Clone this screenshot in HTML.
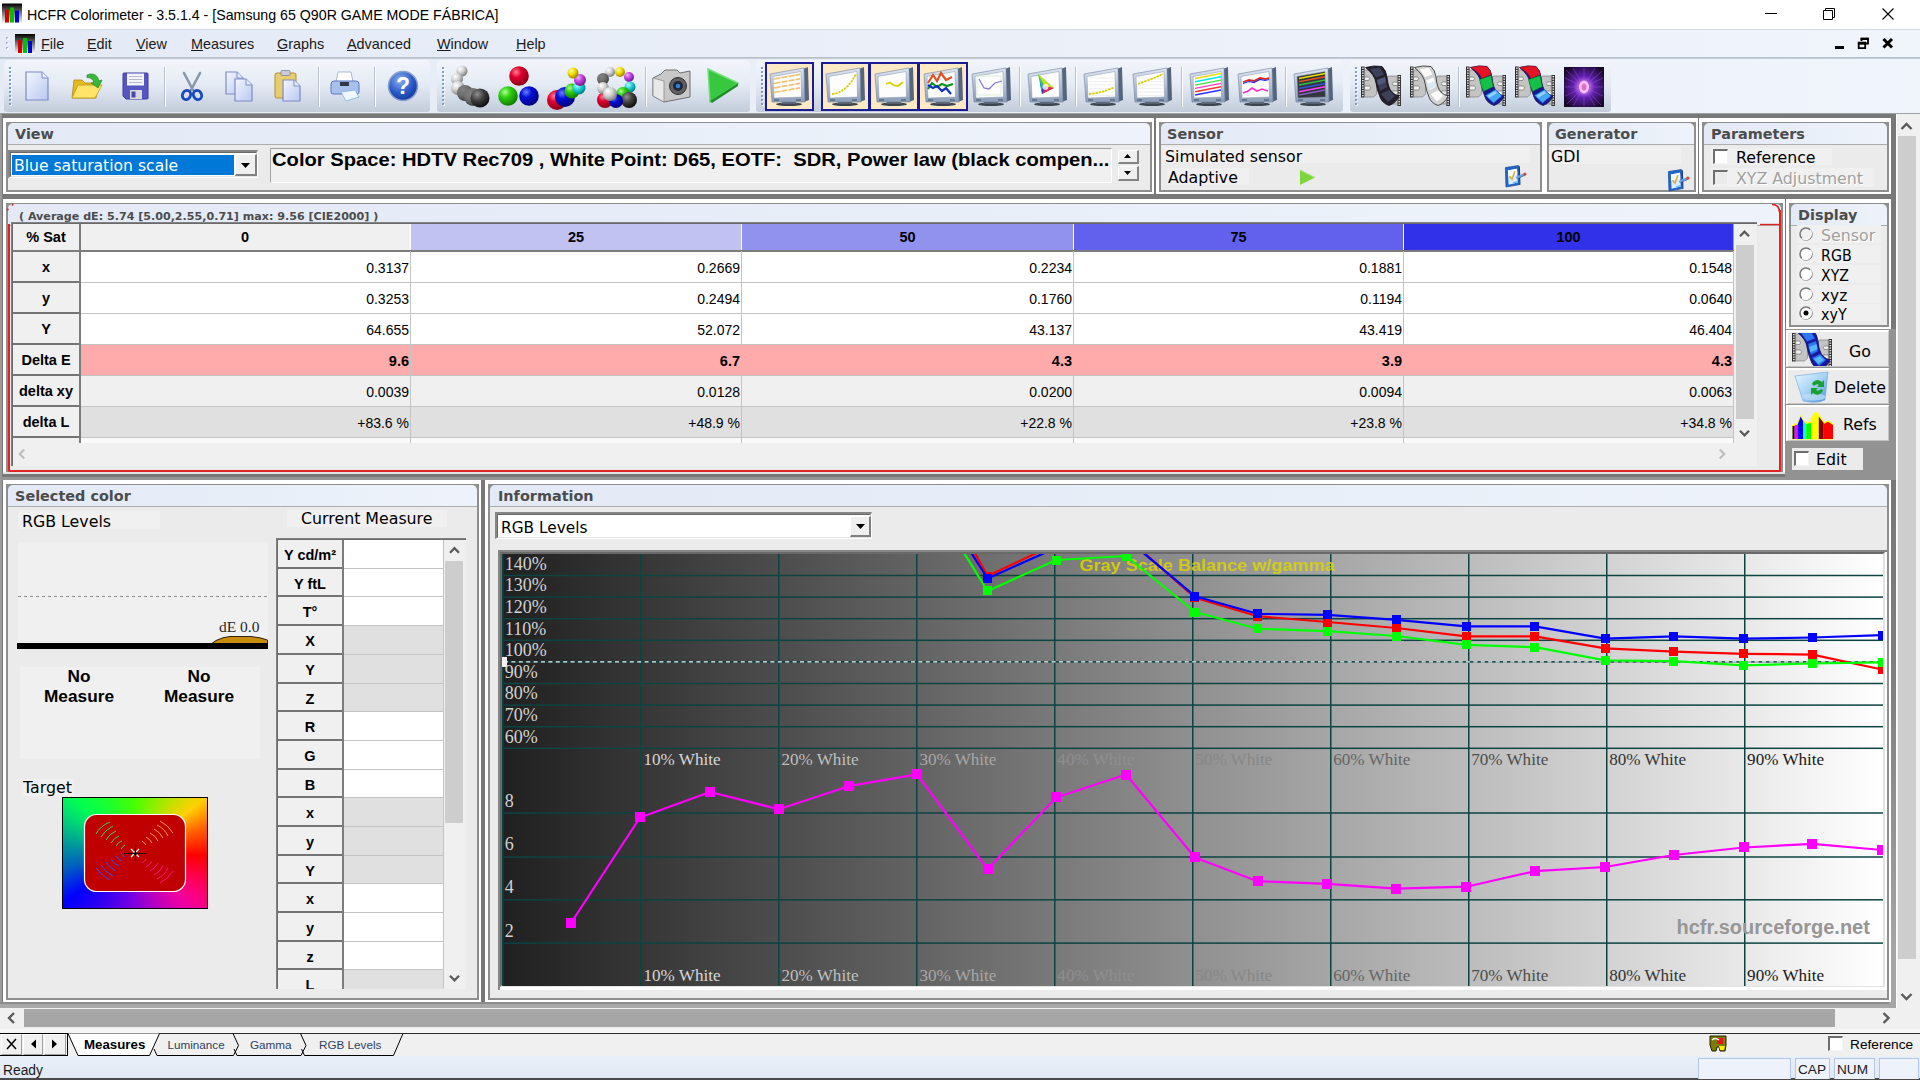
<!DOCTYPE html>
<html lang="en"><head><meta charset="utf-8"><title>HCFR Colorimeter</title>
<style>
html,body{margin:0;padding:0;background:#fff;}
body{width:1920px;height:1080px;position:relative;overflow:hidden;font-family:"Liberation Sans",sans-serif;font-size:14px;color:#000;}
div{position:absolute;box-sizing:border-box;}
svg{position:absolute;overflow:visible;}
.dv{font-family:"DejaVu Sans","Liberation Sans",sans-serif;}
.dvb{font-family:"DejaVu Sans","Liberation Sans",sans-serif;font-weight:bold;}
.ls{font-family:"Liberation Sans",sans-serif;}
.se{font-family:"Liberation Serif",serif;}
.hd{font-family:"DejaVu Sans","Liberation Sans",sans-serif;font-weight:bold;font-size:13.6px;color:#4c4c4c;line-height:16px;transform-origin:0 0;transform:scaleX(1.06);}
.ui{font-family:"Liberation Sans",sans-serif;font-size:14.5px;line-height:18px;}
.c15{font-family:"DejaVu Sans","Liberation Sans",sans-serif;font-size:15.8px;line-height:18px;color:#000;margin-top:1.5px;}
.num{font-family:"Liberation Sans",sans-serif;font-size:14px;line-height:16px;text-align:right;}
.rh{font-family:"Liberation Sans",sans-serif;font-size:14.5px;font-weight:bold;line-height:16px;text-align:center;}
</style></head>
<body>
<div style="left:0px;top:0px;width:1920px;height:29px;background:#fff;"></div>
<svg style="left:2px;top:3px" width="20" height="21" viewBox="0 0 20 20"><defs><linearGradient id="ig2" x1="0" y1="0" x2="0" y2="1"><stop offset="0" stop-color="#000"/><stop offset="1" stop-color="#fff"/></linearGradient></defs><rect width="20" height="20" fill="url(#ig2)"/><rect x="3" y="6" width="4" height="13" fill="#d00000"/><rect x="8" y="4" width="4" height="15" fill="#00c000"/><rect x="13" y="7" width="4" height="12" fill="#0000d0"/></svg>
<div class="ls" style="left:27px;top:6px;white-space:pre;font-size:14.2px;line-height:19px;color:#000;">HCFR Colorimeter - 3.5.1.4 - [Samsung 65 Q90R GAME MODE FÁBRICA]</div>
<svg style="left:0;top:0" width="1920" height="30"><path d="M1765 13.500h12" stroke="#000" stroke-width="1" fill="none"/><path d="M1823.500 10.500h9v9h-9z M1825.500 10.500v-2h9v9h-2" stroke="#000" stroke-width="1" fill="none"/><path d="M1882.500 8.500l11 11M1893.500 8.500l-11 11" stroke="#000" stroke-width="1.100" fill="none"/></svg>
<div style="left:0px;top:29px;width:1920px;height:29px;background:linear-gradient(90deg,#e4ebf6,#e9eef8 40%,#f0f4fb);"></div>
<div style="left:0px;top:57px;width:1920px;height:2px;background:linear-gradient(#b4bcc8,#c9cfd9);"></div>
<div style="left:0px;top:29px;width:1920px;height:1px;background:#d4dbe6;"></div>
<div style="left:6px;top:37px;width:2px;height:2px;background:#9fb4d6;"></div>
<div style="left:7px;top:38px;width:2px;height:2px;background:#fff;opacity:.8;"></div>
<div style="left:6px;top:42px;width:2px;height:2px;background:#9fb4d6;"></div>
<div style="left:7px;top:43px;width:2px;height:2px;background:#fff;opacity:.8;"></div>
<div style="left:6px;top:47px;width:2px;height:2px;background:#9fb4d6;"></div>
<div style="left:7px;top:48px;width:2px;height:2px;background:#fff;opacity:.8;"></div>
<svg style="left:15px;top:34px" width="20" height="20" viewBox="0 0 20 20"><defs><linearGradient id="ig15" x1="0" y1="0" x2="0" y2="1"><stop offset="0" stop-color="#000"/><stop offset="1" stop-color="#fff"/></linearGradient></defs><rect width="20" height="20" fill="url(#ig15)"/><rect x="3" y="6" width="4" height="13" fill="#d00000"/><rect x="8" y="4" width="4" height="15" fill="#00c000"/><rect x="13" y="7" width="4" height="12" fill="#0000d0"/></svg>
<div class="ls" style="left:41px;top:35px;white-space:pre;font-size:14.4px;line-height:19px;color:#1a1a1a;"><u>F</u>ile</div>
<div class="ls" style="left:87px;top:35px;white-space:pre;font-size:14.4px;line-height:19px;color:#1a1a1a;"><u>E</u>dit</div>
<div class="ls" style="left:136px;top:35px;white-space:pre;font-size:14.4px;line-height:19px;color:#1a1a1a;"><u>V</u>iew</div>
<div class="ls" style="left:191px;top:35px;white-space:pre;font-size:14.4px;line-height:19px;color:#1a1a1a;"><u>M</u>easures</div>
<div class="ls" style="left:277px;top:35px;white-space:pre;font-size:14.4px;line-height:19px;color:#1a1a1a;"><u>G</u>raphs</div>
<div class="ls" style="left:347px;top:35px;white-space:pre;font-size:14.4px;line-height:19px;color:#1a1a1a;"><u>A</u>dvanced</div>
<div class="ls" style="left:437px;top:35px;white-space:pre;font-size:14.4px;line-height:19px;color:#1a1a1a;"><u>W</u>indow</div>
<div class="ls" style="left:516px;top:35px;white-space:pre;font-size:14.4px;line-height:19px;color:#1a1a1a;"><u>H</u>elp</div>
<svg style="left:0;top:30px" width="1920" height="28"><path d="M1835 17.500h9" stroke="#000" stroke-width="3"/><path d="M1858.700 13.600h6.500v4.500h-6.500z" stroke="#000" stroke-width="1.800" fill="none"/><path d="M1857.800 13h8.300" stroke="#000" stroke-width="2.600"/><path d="M1861.500 11v-2h6.500v4.500h-2" stroke="#000" stroke-width="1.800" fill="none"/><path d="M1860.600 8.800h8.300" stroke="#000" stroke-width="2.400"/><path d="M1883.500 9l8.500 8.500M1892 9l-8.500 8.500" stroke="#000" stroke-width="3" fill="none"/></svg>
<div style="left:0px;top:59px;width:1920px;height:54px;background:linear-gradient(90deg,#e4ebf6,#e9eef8 40%,#f0f4fb);"></div>
<div style="left:4px;top:60px;width:426px;height:52px;background:linear-gradient(#f2f5fa 0%,#e6ecf5 45%,#d3dbe8 75%,#c3ccda 100%);border-radius:5px 5px 3px 3px;"></div>
<div style="left:9px;top:67px;width:2px;height:2px;background:#7f9ccd;"></div>
<div style="left:10px;top:68px;width:2px;height:2px;background:#fff;opacity:.7;"></div>
<div style="left:9px;top:67px;width:2px;height:2px;background:#7f9ccd;"></div>
<div style="left:9px;top:71px;width:2px;height:2px;background:#7f9ccd;"></div>
<div style="left:10px;top:72px;width:2px;height:2px;background:#fff;opacity:.7;"></div>
<div style="left:9px;top:71px;width:2px;height:2px;background:#7f9ccd;"></div>
<div style="left:9px;top:75px;width:2px;height:2px;background:#7f9ccd;"></div>
<div style="left:10px;top:76px;width:2px;height:2px;background:#fff;opacity:.7;"></div>
<div style="left:9px;top:75px;width:2px;height:2px;background:#7f9ccd;"></div>
<div style="left:9px;top:79px;width:2px;height:2px;background:#7f9ccd;"></div>
<div style="left:10px;top:80px;width:2px;height:2px;background:#fff;opacity:.7;"></div>
<div style="left:9px;top:79px;width:2px;height:2px;background:#7f9ccd;"></div>
<div style="left:9px;top:83px;width:2px;height:2px;background:#7f9ccd;"></div>
<div style="left:10px;top:84px;width:2px;height:2px;background:#fff;opacity:.7;"></div>
<div style="left:9px;top:83px;width:2px;height:2px;background:#7f9ccd;"></div>
<div style="left:9px;top:87px;width:2px;height:2px;background:#7f9ccd;"></div>
<div style="left:10px;top:88px;width:2px;height:2px;background:#fff;opacity:.7;"></div>
<div style="left:9px;top:87px;width:2px;height:2px;background:#7f9ccd;"></div>
<div style="left:9px;top:91px;width:2px;height:2px;background:#7f9ccd;"></div>
<div style="left:10px;top:92px;width:2px;height:2px;background:#fff;opacity:.7;"></div>
<div style="left:9px;top:91px;width:2px;height:2px;background:#7f9ccd;"></div>
<div style="left:9px;top:95px;width:2px;height:2px;background:#7f9ccd;"></div>
<div style="left:10px;top:96px;width:2px;height:2px;background:#fff;opacity:.7;"></div>
<div style="left:9px;top:95px;width:2px;height:2px;background:#7f9ccd;"></div>
<div style="left:9px;top:99px;width:2px;height:2px;background:#7f9ccd;"></div>
<div style="left:10px;top:100px;width:2px;height:2px;background:#fff;opacity:.7;"></div>
<div style="left:9px;top:99px;width:2px;height:2px;background:#7f9ccd;"></div>
<div style="left:9px;top:103px;width:2px;height:2px;background:#7f9ccd;"></div>
<div style="left:10px;top:104px;width:2px;height:2px;background:#fff;opacity:.7;"></div>
<div style="left:9px;top:103px;width:2px;height:2px;background:#7f9ccd;"></div>
<div style="left:437px;top:60px;width:313px;height:52px;background:linear-gradient(#f2f5fa 0%,#e6ecf5 45%,#d3dbe8 75%,#c3ccda 100%);border-radius:5px 5px 3px 3px;"></div>
<div style="left:442px;top:67px;width:2px;height:2px;background:#7f9ccd;"></div>
<div style="left:443px;top:68px;width:2px;height:2px;background:#fff;opacity:.7;"></div>
<div style="left:442px;top:67px;width:2px;height:2px;background:#7f9ccd;"></div>
<div style="left:442px;top:71px;width:2px;height:2px;background:#7f9ccd;"></div>
<div style="left:443px;top:72px;width:2px;height:2px;background:#fff;opacity:.7;"></div>
<div style="left:442px;top:71px;width:2px;height:2px;background:#7f9ccd;"></div>
<div style="left:442px;top:75px;width:2px;height:2px;background:#7f9ccd;"></div>
<div style="left:443px;top:76px;width:2px;height:2px;background:#fff;opacity:.7;"></div>
<div style="left:442px;top:75px;width:2px;height:2px;background:#7f9ccd;"></div>
<div style="left:442px;top:79px;width:2px;height:2px;background:#7f9ccd;"></div>
<div style="left:443px;top:80px;width:2px;height:2px;background:#fff;opacity:.7;"></div>
<div style="left:442px;top:79px;width:2px;height:2px;background:#7f9ccd;"></div>
<div style="left:442px;top:83px;width:2px;height:2px;background:#7f9ccd;"></div>
<div style="left:443px;top:84px;width:2px;height:2px;background:#fff;opacity:.7;"></div>
<div style="left:442px;top:83px;width:2px;height:2px;background:#7f9ccd;"></div>
<div style="left:442px;top:87px;width:2px;height:2px;background:#7f9ccd;"></div>
<div style="left:443px;top:88px;width:2px;height:2px;background:#fff;opacity:.7;"></div>
<div style="left:442px;top:87px;width:2px;height:2px;background:#7f9ccd;"></div>
<div style="left:442px;top:91px;width:2px;height:2px;background:#7f9ccd;"></div>
<div style="left:443px;top:92px;width:2px;height:2px;background:#fff;opacity:.7;"></div>
<div style="left:442px;top:91px;width:2px;height:2px;background:#7f9ccd;"></div>
<div style="left:442px;top:95px;width:2px;height:2px;background:#7f9ccd;"></div>
<div style="left:443px;top:96px;width:2px;height:2px;background:#fff;opacity:.7;"></div>
<div style="left:442px;top:95px;width:2px;height:2px;background:#7f9ccd;"></div>
<div style="left:442px;top:99px;width:2px;height:2px;background:#7f9ccd;"></div>
<div style="left:443px;top:100px;width:2px;height:2px;background:#fff;opacity:.7;"></div>
<div style="left:442px;top:99px;width:2px;height:2px;background:#7f9ccd;"></div>
<div style="left:442px;top:103px;width:2px;height:2px;background:#7f9ccd;"></div>
<div style="left:443px;top:104px;width:2px;height:2px;background:#fff;opacity:.7;"></div>
<div style="left:442px;top:103px;width:2px;height:2px;background:#7f9ccd;"></div>
<div style="left:756px;top:60px;width:587px;height:52px;background:linear-gradient(#f2f5fa 0%,#e6ecf5 45%,#d3dbe8 75%,#c3ccda 100%);border-radius:5px 5px 3px 3px;"></div>
<div style="left:761px;top:67px;width:2px;height:2px;background:#7f9ccd;"></div>
<div style="left:762px;top:68px;width:2px;height:2px;background:#fff;opacity:.7;"></div>
<div style="left:761px;top:67px;width:2px;height:2px;background:#7f9ccd;"></div>
<div style="left:761px;top:71px;width:2px;height:2px;background:#7f9ccd;"></div>
<div style="left:762px;top:72px;width:2px;height:2px;background:#fff;opacity:.7;"></div>
<div style="left:761px;top:71px;width:2px;height:2px;background:#7f9ccd;"></div>
<div style="left:761px;top:75px;width:2px;height:2px;background:#7f9ccd;"></div>
<div style="left:762px;top:76px;width:2px;height:2px;background:#fff;opacity:.7;"></div>
<div style="left:761px;top:75px;width:2px;height:2px;background:#7f9ccd;"></div>
<div style="left:761px;top:79px;width:2px;height:2px;background:#7f9ccd;"></div>
<div style="left:762px;top:80px;width:2px;height:2px;background:#fff;opacity:.7;"></div>
<div style="left:761px;top:79px;width:2px;height:2px;background:#7f9ccd;"></div>
<div style="left:761px;top:83px;width:2px;height:2px;background:#7f9ccd;"></div>
<div style="left:762px;top:84px;width:2px;height:2px;background:#fff;opacity:.7;"></div>
<div style="left:761px;top:83px;width:2px;height:2px;background:#7f9ccd;"></div>
<div style="left:761px;top:87px;width:2px;height:2px;background:#7f9ccd;"></div>
<div style="left:762px;top:88px;width:2px;height:2px;background:#fff;opacity:.7;"></div>
<div style="left:761px;top:87px;width:2px;height:2px;background:#7f9ccd;"></div>
<div style="left:761px;top:91px;width:2px;height:2px;background:#7f9ccd;"></div>
<div style="left:762px;top:92px;width:2px;height:2px;background:#fff;opacity:.7;"></div>
<div style="left:761px;top:91px;width:2px;height:2px;background:#7f9ccd;"></div>
<div style="left:761px;top:95px;width:2px;height:2px;background:#7f9ccd;"></div>
<div style="left:762px;top:96px;width:2px;height:2px;background:#fff;opacity:.7;"></div>
<div style="left:761px;top:95px;width:2px;height:2px;background:#7f9ccd;"></div>
<div style="left:761px;top:99px;width:2px;height:2px;background:#7f9ccd;"></div>
<div style="left:762px;top:100px;width:2px;height:2px;background:#fff;opacity:.7;"></div>
<div style="left:761px;top:99px;width:2px;height:2px;background:#7f9ccd;"></div>
<div style="left:761px;top:103px;width:2px;height:2px;background:#7f9ccd;"></div>
<div style="left:762px;top:104px;width:2px;height:2px;background:#fff;opacity:.7;"></div>
<div style="left:761px;top:103px;width:2px;height:2px;background:#7f9ccd;"></div>
<div style="left:1350px;top:60px;width:261px;height:52px;background:linear-gradient(#f2f5fa 0%,#e6ecf5 45%,#d3dbe8 75%,#c3ccda 100%);border-radius:5px 5px 3px 3px;"></div>
<div style="left:1355px;top:67px;width:2px;height:2px;background:#7f9ccd;"></div>
<div style="left:1356px;top:68px;width:2px;height:2px;background:#fff;opacity:.7;"></div>
<div style="left:1355px;top:67px;width:2px;height:2px;background:#7f9ccd;"></div>
<div style="left:1355px;top:71px;width:2px;height:2px;background:#7f9ccd;"></div>
<div style="left:1356px;top:72px;width:2px;height:2px;background:#fff;opacity:.7;"></div>
<div style="left:1355px;top:71px;width:2px;height:2px;background:#7f9ccd;"></div>
<div style="left:1355px;top:75px;width:2px;height:2px;background:#7f9ccd;"></div>
<div style="left:1356px;top:76px;width:2px;height:2px;background:#fff;opacity:.7;"></div>
<div style="left:1355px;top:75px;width:2px;height:2px;background:#7f9ccd;"></div>
<div style="left:1355px;top:79px;width:2px;height:2px;background:#7f9ccd;"></div>
<div style="left:1356px;top:80px;width:2px;height:2px;background:#fff;opacity:.7;"></div>
<div style="left:1355px;top:79px;width:2px;height:2px;background:#7f9ccd;"></div>
<div style="left:1355px;top:83px;width:2px;height:2px;background:#7f9ccd;"></div>
<div style="left:1356px;top:84px;width:2px;height:2px;background:#fff;opacity:.7;"></div>
<div style="left:1355px;top:83px;width:2px;height:2px;background:#7f9ccd;"></div>
<div style="left:1355px;top:87px;width:2px;height:2px;background:#7f9ccd;"></div>
<div style="left:1356px;top:88px;width:2px;height:2px;background:#fff;opacity:.7;"></div>
<div style="left:1355px;top:87px;width:2px;height:2px;background:#7f9ccd;"></div>
<div style="left:1355px;top:91px;width:2px;height:2px;background:#7f9ccd;"></div>
<div style="left:1356px;top:92px;width:2px;height:2px;background:#fff;opacity:.7;"></div>
<div style="left:1355px;top:91px;width:2px;height:2px;background:#7f9ccd;"></div>
<div style="left:1355px;top:95px;width:2px;height:2px;background:#7f9ccd;"></div>
<div style="left:1356px;top:96px;width:2px;height:2px;background:#fff;opacity:.7;"></div>
<div style="left:1355px;top:95px;width:2px;height:2px;background:#7f9ccd;"></div>
<div style="left:1355px;top:99px;width:2px;height:2px;background:#7f9ccd;"></div>
<div style="left:1356px;top:100px;width:2px;height:2px;background:#fff;opacity:.7;"></div>
<div style="left:1355px;top:99px;width:2px;height:2px;background:#7f9ccd;"></div>
<div style="left:1355px;top:103px;width:2px;height:2px;background:#7f9ccd;"></div>
<div style="left:1356px;top:104px;width:2px;height:2px;background:#fff;opacity:.7;"></div>
<div style="left:1355px;top:103px;width:2px;height:2px;background:#7f9ccd;"></div>
<div style="left:164px;top:67px;width:1px;height:40px;background:#b8c2d2;"></div>
<div style="left:165px;top:67px;width:1px;height:40px;background:#fff;"></div>
<div style="left:318px;top:67px;width:1px;height:40px;background:#b8c2d2;"></div>
<div style="left:319px;top:67px;width:1px;height:40px;background:#fff;"></div>
<div style="left:374px;top:67px;width:1px;height:40px;background:#b8c2d2;"></div>
<div style="left:375px;top:67px;width:1px;height:40px;background:#fff;"></div>
<div style="left:645px;top:67px;width:1px;height:40px;background:#b8c2d2;"></div>
<div style="left:646px;top:67px;width:1px;height:40px;background:#fff;"></div>
<div style="left:1019px;top:67px;width:1px;height:40px;background:#b8c2d2;"></div>
<div style="left:1020px;top:67px;width:1px;height:40px;background:#fff;"></div>
<div style="left:1075px;top:67px;width:1px;height:40px;background:#b8c2d2;"></div>
<div style="left:1076px;top:67px;width:1px;height:40px;background:#fff;"></div>
<div style="left:1181px;top:67px;width:1px;height:40px;background:#b8c2d2;"></div>
<div style="left:1182px;top:67px;width:1px;height:40px;background:#fff;"></div>
<div style="left:1285px;top:67px;width:1px;height:40px;background:#b8c2d2;"></div>
<div style="left:1286px;top:67px;width:1px;height:40px;background:#fff;"></div>
<div style="left:1458px;top:67px;width:1px;height:40px;background:#b8c2d2;"></div>
<div style="left:1459px;top:67px;width:1px;height:40px;background:#fff;"></div>
<svg width="0" height="0" style="left:0;top:0"><defs>
<linearGradient id="bez" x1="0" y1="0" x2="0" y2="1"><stop offset="0" stop-color="#dfe7f2"/><stop offset="1" stop-color="#8c9db8"/></linearGradient>
<linearGradient id="pg" x1="0" y1="0" x2="1" y2="1"><stop offset="0" stop-color="#f4f7ff"/><stop offset="1" stop-color="#b9c8f2"/></linearGradient>
<radialGradient id="bR" cx=".35" cy=".3" r=".7"><stop offset="0" stop-color="#ff8090"/><stop offset=".4" stop-color="#e00030"/><stop offset="1" stop-color="#900018"/></radialGradient>
<radialGradient id="bG" cx=".35" cy=".3" r=".7"><stop offset="0" stop-color="#b0ff90"/><stop offset=".4" stop-color="#30d010"/><stop offset="1" stop-color="#108000"/></radialGradient>
<radialGradient id="bB" cx=".35" cy=".3" r=".7"><stop offset="0" stop-color="#7080ff"/><stop offset=".4" stop-color="#0010d8"/><stop offset="1" stop-color="#000080"/></radialGradient>
<radialGradient id="bW" cx=".35" cy=".3" r=".7"><stop offset="0" stop-color="#ffffff"/><stop offset=".5" stop-color="#d0d0d0"/><stop offset="1" stop-color="#808080"/></radialGradient>
<radialGradient id="bK" cx=".35" cy=".3" r=".7"><stop offset="0" stop-color="#909090"/><stop offset=".5" stop-color="#404040"/><stop offset="1" stop-color="#101010"/></radialGradient>
<radialGradient id="bM" cx=".35" cy=".3" r=".7"><stop offset="0" stop-color="#808080"/><stop offset=".5" stop-color="#707070"/><stop offset="1" stop-color="#404040"/></radialGradient>
<radialGradient id="bY" cx=".35" cy=".3" r=".7"><stop offset="0" stop-color="#ffffa0"/><stop offset=".5" stop-color="#f0d800"/><stop offset="1" stop-color="#a08800"/></radialGradient>
<radialGradient id="bP" cx=".35" cy=".3" r=".7"><stop offset="0" stop-color="#f0b0ff"/><stop offset=".5" stop-color="#c040e0"/><stop offset="1" stop-color="#702090"/></radialGradient>
<radialGradient id="bC" cx=".35" cy=".3" r=".7"><stop offset="0" stop-color="#b0ffff"/><stop offset=".5" stop-color="#20d0d8"/><stop offset="1" stop-color="#008088"/></radialGradient>
<radialGradient id="hb" cx=".4" cy=".3" r=".75"><stop offset="0" stop-color="#8fb0f0"/><stop offset=".6" stop-color="#2858c8"/><stop offset="1" stop-color="#143890"/></radialGradient>
<radialGradient id="pur" cx=".5" cy=".5" r=".6"><stop offset="0" stop-color="#ffd0ff"/><stop offset=".18" stop-color="#d070f0"/><stop offset=".45" stop-color="#6020b0"/><stop offset="1" stop-color="#180828"/></radialGradient>
</defs></svg>
<div style="left:765px;top:62px;width:49px;height:49px;background:#fde9c4;border:2px solid #1c1c94;"></div>
<div style="left:821px;top:62px;width:49px;height:49px;background:#fde9c4;border:2px solid #1c1c94;"></div>
<div style="left:869px;top:62px;width:50px;height:49px;background:#fde9c4;border:2px solid #1c1c94;"></div>
<div style="left:918px;top:62px;width:50px;height:49px;background:#fde9c4;border:2px solid #1c1c94;"></div>
<svg style="left:769px;top:66px" width="40" height="40" viewBox="0 0 40 40"><ellipse cx="20" cy="38.200" rx="13" ry="1.800" fill="#3c444e"/><path d="M14 34l12 0l2 4l-16 0z" fill="#58626f"/><path d="M34 3l5-2l1 33l-5 2z" fill="#55657c"/><path d="M1 8l34-6l1 34l-33 0z" fill="url(#bez)" stroke="#6f809a" stroke-width=".6"/><path d="M4 10.500l28-5l.5 25.500l-27.500 1z" fill="#fdfdfd" stroke="#8594aa" stroke-width=".5"/><rect x="5" y="33.300" width="5" height="1.400" fill="#55657c"/><rect x="27" y="33.300" width="5" height="1.400" fill="#55657c"/><path d="M5 13l26-4.600" stroke="#f0c070" stroke-width="1.600"/><path d="M5 17.5l26-4.600" stroke="#f0c070" stroke-width="1.600"/><path d="M5 22l26-4.600" stroke="#f0c070" stroke-width="1.600"/><path d="M5 26.5l26-4.600" stroke="#f0c070" stroke-width="1.600"/><path d="M12 11v20M19 10v20M26 9v20" stroke="#fff" stroke-width="1"/></svg>
<svg style="left:825px;top:66px" width="40" height="40" viewBox="0 0 40 40"><ellipse cx="20" cy="38.200" rx="13" ry="1.800" fill="#3c444e"/><path d="M14 34l12 0l2 4l-16 0z" fill="#58626f"/><path d="M34 3l5-2l1 33l-5 2z" fill="#55657c"/><path d="M1 8l34-6l1 34l-33 0z" fill="url(#bez)" stroke="#6f809a" stroke-width=".6"/><path d="M4 10.500l28-5l.5 25.500l-27.500 1z" fill="#fdfdfd" stroke="#8594aa" stroke-width=".5"/><rect x="5" y="33.300" width="5" height="1.400" fill="#55657c"/><rect x="27" y="33.300" width="5" height="1.400" fill="#55657c"/><path d="M7 28q14-1 24-20" stroke="#d8d000" stroke-width="1.800" fill="none" stroke-dasharray="2.500 .8"/></svg>
<svg style="left:874px;top:66px" width="40" height="40" viewBox="0 0 40 40"><ellipse cx="20" cy="38.200" rx="13" ry="1.800" fill="#3c444e"/><path d="M14 34l12 0l2 4l-16 0z" fill="#58626f"/><path d="M34 3l5-2l1 33l-5 2z" fill="#55657c"/><path d="M1 8l34-6l1 34l-33 0z" fill="url(#bez)" stroke="#6f809a" stroke-width=".6"/><path d="M4 10.500l28-5l.5 25.500l-27.500 1z" fill="#fdfdfd" stroke="#8594aa" stroke-width=".5"/><rect x="5" y="33.300" width="5" height="1.400" fill="#55657c"/><rect x="27" y="33.300" width="5" height="1.400" fill="#55657c"/><path d="M12 18l4-1.500l4 3l4 .5l5-4" stroke="#d8d000" stroke-width="1.800" fill="none"/></svg>
<svg style="left:923px;top:66px" width="40" height="40" viewBox="0 0 40 40"><ellipse cx="20" cy="38.200" rx="13" ry="1.800" fill="#3c444e"/><path d="M14 34l12 0l2 4l-16 0z" fill="#58626f"/><path d="M34 3l5-2l1 33l-5 2z" fill="#55657c"/><path d="M1 8l34-6l1 34l-33 0z" fill="url(#bez)" stroke="#6f809a" stroke-width=".6"/><path d="M4 10.500l28-5l.5 25.500l-27.500 1z" fill="#fdfdfd" stroke="#8594aa" stroke-width=".5"/><rect x="5" y="33.300" width="5" height="1.400" fill="#55657c"/><rect x="27" y="33.300" width="5" height="1.400" fill="#55657c"/><path d="M5 17l5-8l4 6l4-8l5 7l6-3" stroke="#e05020" stroke-width="2.200" fill="none"/><path d="M5 23l4-6l5 4l5-3l5 2l6-2" stroke="#109020" stroke-width="2.200" fill="none"/><path d="M5 19l5 3l4-2l5 5l4-3l5 6" stroke="#1030c0" stroke-width="2.200" fill="none"/></svg>
<svg style="left:971px;top:66px" width="40" height="40" viewBox="0 0 40 40"><ellipse cx="20" cy="38.200" rx="13" ry="1.800" fill="#3c444e"/><path d="M14 34l12 0l2 4l-16 0z" fill="#58626f"/><path d="M34 3l5-2l1 33l-5 2z" fill="#55657c"/><path d="M1 8l34-6l1 34l-33 0z" fill="url(#bez)" stroke="#6f809a" stroke-width=".6"/><path d="M4 10.500l28-5l.5 25.500l-27.500 1z" fill="#fdfdfd" stroke="#8594aa" stroke-width=".5"/><rect x="5" y="33.300" width="5" height="1.400" fill="#55657c"/><rect x="27" y="33.300" width="5" height="1.400" fill="#55657c"/><rect x="6" y="10" width="24" height="19" fill="none" stroke="#d8e8d0" stroke-width=".8"/><path d="M8 13l5 9l5 1l6-6l7-2" stroke="#8878d8" stroke-width="1.300" fill="none"/></svg>
<svg style="left:1027px;top:66px" width="40" height="40" viewBox="0 0 40 40"><ellipse cx="20" cy="38.200" rx="13" ry="1.800" fill="#3c444e"/><path d="M14 34l12 0l2 4l-16 0z" fill="#58626f"/><path d="M34 3l5-2l1 33l-5 2z" fill="#55657c"/><path d="M1 8l34-6l1 34l-33 0z" fill="url(#bez)" stroke="#6f809a" stroke-width=".6"/><path d="M4 10.500l28-5l.5 25.500l-27.500 1z" fill="#fdfdfd" stroke="#8594aa" stroke-width=".5"/><rect x="5" y="33.300" width="5" height="1.400" fill="#55657c"/><rect x="27" y="33.300" width="5" height="1.400" fill="#55657c"/><path d="M11 8l16 14l-12 6z" fill="#40d040"/><path d="M11 8l16 14l-7 2z" fill="#f0e020" opacity=".8"/><path d="M27 22l-12 6l3-8z" fill="#e02060"/><path d="M15 28l-2-12l5 6z" fill="#2040e0"/><path d="M13 12l4 9l-3 3z" fill="#20c0c0" opacity=".8"/><circle cx="18.500" cy="21" r="3" fill="#fff" opacity=".75"/></svg>
<svg style="left:1083px;top:66px" width="40" height="40" viewBox="0 0 40 40"><ellipse cx="20" cy="38.200" rx="13" ry="1.800" fill="#3c444e"/><path d="M14 34l12 0l2 4l-16 0z" fill="#58626f"/><path d="M34 3l5-2l1 33l-5 2z" fill="#55657c"/><path d="M1 8l34-6l1 34l-33 0z" fill="url(#bez)" stroke="#6f809a" stroke-width=".6"/><path d="M4 10.500l28-5l.5 25.500l-27.500 1z" fill="#fdfdfd" stroke="#8594aa" stroke-width=".5"/><rect x="5" y="33.300" width="5" height="1.400" fill="#55657c"/><rect x="27" y="33.300" width="5" height="1.400" fill="#55657c"/><path d="M6 12h25" stroke="#e8e8e8" stroke-width=".6"/><path d="M6 15.5h25" stroke="#e8e8e8" stroke-width=".6"/><path d="M6 19h25" stroke="#e8e8e8" stroke-width=".6"/><path d="M6 22.5h25" stroke="#e8e8e8" stroke-width=".6"/><path d="M6 26h25" stroke="#e8e8e8" stroke-width=".6"/><path d="M6 29.5h25" stroke="#e8e8e8" stroke-width=".6"/><path d="M6 28l8-1l8-2l9-3.500" stroke="#d8d000" stroke-width="1.800" fill="none" stroke-dasharray="2.500 .8"/></svg>
<svg style="left:1132px;top:66px" width="40" height="40" viewBox="0 0 40 40"><ellipse cx="20" cy="38.200" rx="13" ry="1.800" fill="#3c444e"/><path d="M14 34l12 0l2 4l-16 0z" fill="#58626f"/><path d="M34 3l5-2l1 33l-5 2z" fill="#55657c"/><path d="M1 8l34-6l1 34l-33 0z" fill="url(#bez)" stroke="#6f809a" stroke-width=".6"/><path d="M4 10.500l28-5l.5 25.500l-27.500 1z" fill="#fdfdfd" stroke="#8594aa" stroke-width=".5"/><rect x="5" y="33.300" width="5" height="1.400" fill="#55657c"/><rect x="27" y="33.300" width="5" height="1.400" fill="#55657c"/><path d="M6 12h25" stroke="#e8e8e8" stroke-width=".6"/><path d="M6 15.5h25" stroke="#e8e8e8" stroke-width=".6"/><path d="M6 19h25" stroke="#e8e8e8" stroke-width=".6"/><path d="M6 22.5h25" stroke="#e8e8e8" stroke-width=".6"/><path d="M6 26h25" stroke="#e8e8e8" stroke-width=".6"/><path d="M6 29.5h25" stroke="#e8e8e8" stroke-width=".6"/><path d="M6 18l8-3l8-3l9-4" stroke="#d8d000" stroke-width="1.800" fill="none" stroke-dasharray="2.500 .8"/></svg>
<svg style="left:1189px;top:66px" width="40" height="40" viewBox="0 0 40 40"><ellipse cx="20" cy="38.200" rx="13" ry="1.800" fill="#3c444e"/><path d="M14 34l12 0l2 4l-16 0z" fill="#58626f"/><path d="M34 3l5-2l1 33l-5 2z" fill="#55657c"/><path d="M1 8l34-6l1 34l-33 0z" fill="url(#bez)" stroke="#6f809a" stroke-width=".6"/><path d="M4 10.500l28-5l.5 25.500l-27.500 1z" fill="#fdfdfd" stroke="#8594aa" stroke-width=".5"/><rect x="5" y="33.300" width="5" height="1.400" fill="#55657c"/><rect x="27" y="33.300" width="5" height="1.400" fill="#55657c"/><path d="M6 12.5l26-5" stroke="#e8e000" stroke-width="1.400"/><path d="M6 15.8l26-5" stroke="#00e8e8" stroke-width="1.400"/><path d="M6 19.1l26-5" stroke="#40e040" stroke-width="1.400"/><path d="M6 22.4l26-5" stroke="#ff40c0" stroke-width="1.400"/><path d="M6 25.7l26-5" stroke="#ff3030" stroke-width="1.400"/><path d="M6 29l26-5" stroke="#3030ff" stroke-width="1.400"/></svg>
<svg style="left:1237px;top:66px" width="40" height="40" viewBox="0 0 40 40"><ellipse cx="20" cy="38.200" rx="13" ry="1.800" fill="#3c444e"/><path d="M14 34l12 0l2 4l-16 0z" fill="#58626f"/><path d="M34 3l5-2l1 33l-5 2z" fill="#55657c"/><path d="M1 8l34-6l1 34l-33 0z" fill="url(#bez)" stroke="#6f809a" stroke-width=".6"/><path d="M4 10.500l28-5l.5 25.500l-27.500 1z" fill="#fdfdfd" stroke="#8594aa" stroke-width=".5"/><rect x="5" y="33.300" width="5" height="1.400" fill="#55657c"/><rect x="27" y="33.300" width="5" height="1.400" fill="#55657c"/><path d="M6 16l6-2l5 1l6-3l5 1l4-1" stroke="#e02020" stroke-width="1.800" fill="none"/><path d="M6 17.500l6-2l5 1l6-3l5 1l4-1" stroke="#2030e0" stroke-width="1.200" fill="none"/><path d="M6 27l5-2l4-3l5 3l5-2l6 2" stroke="#ff30d0" stroke-width="1.600" fill="none"/></svg>
<svg style="left:1293px;top:66px" width="40" height="40" viewBox="0 0 40 40"><ellipse cx="20" cy="38.200" rx="13" ry="1.800" fill="#3c444e"/><path d="M14 34l12 0l2 4l-16 0z" fill="#58626f"/><path d="M34 3l5-2l1 33l-5 2z" fill="#55657c"/><path d="M1 8l34-6l1 34l-33 0z" fill="url(#bez)" stroke="#6f809a" stroke-width=".6"/><path d="M4 10.500l28-5l.5 25.500l-27.500 1z" fill="#34363c" stroke="#8594aa" stroke-width=".5"/><rect x="5" y="33.300" width="5" height="1.400" fill="#55657c"/><rect x="27" y="33.300" width="5" height="1.400" fill="#55657c"/><path d="M6 12.5l26-5" stroke="#e8e000" stroke-width="1.500"/><path d="M6 15.8l26-5" stroke="#e05020" stroke-width="1.500"/><path d="M6 19.1l26-5" stroke="#30c040" stroke-width="1.500"/><path d="M6 22.4l26-5" stroke="#3050e0" stroke-width="1.500"/><path d="M6 25.7l26-5" stroke="#ff40ff" stroke-width="1.500"/><path d="M6 29l26-5" stroke="#8060c0" stroke-width="1.500"/></svg>
<svg style="left:24px;top:70px" width="28" height="32" viewBox="0 0 28 32"><path d="M2 2h16l6 6v22h-22z" fill="url(#pg)" stroke="#7c8cc4" stroke-width="1.200"/><path d="M18 2v6h6" fill="#e8eeff" stroke="#7c8cc4" stroke-width="1"/></svg>
<svg style="left:70px;top:70px" width="34" height="32" viewBox="0 0 34 32"><path d="M2 28l2-18h8l3 3h12l-1 15z" fill="#e8b820" stroke="#b08810" stroke-width=".8"/><path d="M2 28l6-13h24l-7 13z" fill="#ffe468" stroke="#c09818" stroke-width=".8"/><path d="M17 5c7-3 11 1 12 6l3-1l-4 8l-7-5l3-.5c-1-3-3-5-7-5z" fill="#38b838" stroke="#188018" stroke-width=".6"/></svg>
<svg style="left:122px;top:72px" width="28" height="28" viewBox="0 0 28 28"><path d="M1 2q0-1 1-1h23q1 0 1 1v24q0 1-1 1h-21l-3-3z" fill="#5656c0" stroke="#3c3ca0" stroke-width="1"/><rect x="5" y="1.500" width="17" height="12" fill="#f4f4f8"/><path d="M7 4.500h13M7 7.500h13M7 10.500h13" stroke="#b8b8c8" stroke-width="1"/><rect x="8" y="18" width="12" height="9" fill="#d8d8e0"/><rect x="9.500" y="19.500" width="4" height="6" fill="#4848b0"/></svg>
<svg style="left:180px;top:72px" width="24" height="30" viewBox="0 0 24 30"><path d="M4 1l9 17M20 1l-9 17" stroke="#8898a8" stroke-width="2.600" stroke-linecap="round"/><ellipse cx="6.500" cy="23" rx="4" ry="4.800" fill="none" stroke="#1848c0" stroke-width="2.800" transform="rotate(25 6.500 23)"/><ellipse cx="17.500" cy="23" rx="4" ry="4.800" fill="none" stroke="#1848c0" stroke-width="2.800" transform="rotate(-25 17.500 23)"/></svg>
<svg style="left:224px;top:71px" width="30" height="32" viewBox="0 0 30 32"><path d="M2 1h11l6 6v16h-17z" fill="url(#pg)" stroke="#7c8cc4" stroke-width="1.200"/><path d="M13 1v6h6" fill="#e8eeff" stroke="#7c8cc4" stroke-width="1"/><path d="M11 8h11l6 6v16h-17z" fill="url(#pg)" stroke="#7c8cc4" stroke-width="1.200"/><path d="M22 8v6h6" fill="#e8eeff" stroke="#7c8cc4" stroke-width="1"/></svg>
<svg style="left:273px;top:69px" width="30" height="34" viewBox="0 0 30 34"><rect x="2" y="4" width="21" height="25" rx="2" fill="#e8cc70" stroke="#b09030" stroke-width="1"/><rect x="8" y="1.500" width="9" height="5" rx="1" fill="#c8ccd8" stroke="#8088a0" stroke-width=".8"/><path d="M10 11h11l6 6v15h-17z" fill="url(#pg)" stroke="#7c8cc4" stroke-width="1.200"/><path d="M21 11v6h6" fill="#e8eeff" stroke="#7c8cc4" stroke-width="1"/></svg>
<svg style="left:329px;top:70px" width="32" height="34" viewBox="0 0 32 34"><path d="M9 2h13l2 10h-17z" fill="#fff" stroke="#a0a8c0" stroke-width=".8"/><path d="M2 14q0-3 3-3h22q3 0 3 3v8q0 2-2 2h-24q-2 0-2-2z" fill="#a8c0ec" stroke="#5878c0" stroke-width="1"/><rect x="11" y="12" width="9" height="4" fill="#303848"/><path d="M12 22l14-2l4 7l-13 4z" fill="#f0f8ff" stroke="#80b0e0" stroke-width=".8"/></svg>
<svg style="left:387px;top:70px" width="32" height="32" viewBox="0 0 32 32"><circle cx="16" cy="16" r="14.500" fill="url(#hb)" stroke="#88a0d0" stroke-width="1.500"/><text x="16" y="24" text-anchor="middle" font-family="Liberation Sans" font-weight="bold" font-size="23" fill="#fff">?</text></svg>
<svg style="left:448px;top:64px" width="44" height="44" viewBox="0 0 44 44"><circle cx="14" cy="7" r="5.5" fill="url(#bW)"/><circle cx="9" cy="15" r="6" fill="url(#bW)"/><circle cx="10" cy="24" r="7" fill="url(#bW)"/><circle cx="17" cy="29" r="8" fill="url(#bM)"/><circle cx="25" cy="33" r="9" fill="url(#bM)"/><circle cx="32" cy="34" r="9.5" fill="url(#bK)"/></svg>
<svg style="left:497px;top:64px" width="44" height="44" viewBox="0 0 44 44"><circle cx="22" cy="12" r="9.8" fill="url(#bR)"/><circle cx="11" cy="32" r="9.8" fill="url(#bG)"/><circle cx="32" cy="32" r="9.8" fill="url(#bB)"/></svg>
<svg style="left:545px;top:64px" width="44" height="44" viewBox="0 0 44 44"><circle cx="12" cy="36" r="10" fill="url(#bR)"/><circle cx="20" cy="33" r="10" fill="url(#bB)"/><circle cx="27" cy="27" r="7.5" fill="url(#bG)"/><circle cx="34" cy="24" r="6.5" fill="url(#bC)"/><circle cx="35" cy="16" r="6" fill="url(#bP)"/><circle cx="28" cy="9" r="5.5" fill="url(#bY)"/></svg>
<svg style="left:595px;top:64px" width="44" height="44" viewBox="0 0 44 44"><circle cx="15" cy="8" r="5" fill="url(#bW)"/><circle cx="25" cy="8" r="5" fill="url(#bY)"/><circle cx="34" cy="13" r="5" fill="url(#bP)"/><circle cx="35" cy="23" r="5.5" fill="url(#bC)"/><circle cx="28" cy="30" r="7" fill="url(#bG)"/><circle cx="34" cy="36" r="8" fill="url(#bK)"/><circle cx="10" cy="36" r="8" fill="url(#bR)"/><circle cx="21" cy="37" r="7" fill="url(#bB)"/><circle cx="8" cy="15" r="6" fill="url(#bM)"/><circle cx="8" cy="24" r="6" fill="url(#bW)"/><circle cx="15" cy="30" r="7" fill="url(#bW)"/></svg>
<svg style="left:651px;top:66px" width="42" height="40" viewBox="0 0 42 40"><path d="M2 12l8-4l4-4h12l3 3l10-2v26l-26 5l-11-6z" fill="#c8c8c8" stroke="#707070" stroke-width="1"/><path d="M2 12l11 3v21l-11-6z" fill="#e8e8e8" stroke="#808080" stroke-width=".7"/><circle cx="27" cy="20" r="8.500" fill="#606060" stroke="#303030"/><circle cx="27" cy="20" r="5" fill="#202838"/><circle cx="27" cy="20" r="2.200" fill="#3080e0"/></svg>
<svg style="left:706px;top:68px" width="34" height="36" viewBox="0 0 34 36"><path d="M2 1l30 14l-28 19z" fill="#38c840" stroke="#70e078" stroke-width="1.500"/><path d="M4 33l28-18l0 3l-26 17z" fill="#209028"/></svg>
<svg style="left:1361px;top:66px" width="40" height="40" viewBox="0 0 40 40"><rect x="0" y=".5" width="3.600" height="31" fill="#303030"/><rect x="36.400" y="9" width="3.600" height="31" fill="#303030"/><rect x="1" y="1.5" width="1.700" height="1.300" fill="#e8e8e8"/><rect x="1" y="4" width="1.700" height="1.300" fill="#e8e8e8"/><rect x="1" y="6.5" width="1.700" height="1.300" fill="#e8e8e8"/><rect x="1" y="9" width="1.700" height="1.300" fill="#e8e8e8"/><rect x="1" y="11.5" width="1.700" height="1.300" fill="#e8e8e8"/><rect x="1" y="14" width="1.700" height="1.300" fill="#e8e8e8"/><rect x="1" y="16.5" width="1.700" height="1.300" fill="#e8e8e8"/><rect x="1" y="19" width="1.700" height="1.300" fill="#e8e8e8"/><rect x="1" y="21.5" width="1.700" height="1.300" fill="#e8e8e8"/><rect x="1" y="24" width="1.700" height="1.300" fill="#e8e8e8"/><rect x="1" y="26.5" width="1.700" height="1.300" fill="#e8e8e8"/><rect x="1" y="29" width="1.700" height="1.300" fill="#e8e8e8"/><rect x="37.400" y="10" width="1.700" height="1.300" fill="#e8e8e8"/><rect x="37.400" y="12.5" width="1.700" height="1.300" fill="#e8e8e8"/><rect x="37.400" y="15" width="1.700" height="1.300" fill="#e8e8e8"/><rect x="37.400" y="17.5" width="1.700" height="1.300" fill="#e8e8e8"/><rect x="37.400" y="20" width="1.700" height="1.300" fill="#e8e8e8"/><rect x="37.400" y="22.5" width="1.700" height="1.300" fill="#e8e8e8"/><rect x="37.400" y="25" width="1.700" height="1.300" fill="#e8e8e8"/><rect x="37.400" y="27.5" width="1.700" height="1.300" fill="#e8e8e8"/><rect x="37.400" y="30" width="1.700" height="1.300" fill="#e8e8e8"/><rect x="37.400" y="32.5" width="1.700" height="1.300" fill="#e8e8e8"/><rect x="37.400" y="35" width="1.700" height="1.300" fill="#e8e8e8"/><rect x="37.400" y="37.5" width="1.700" height="1.300" fill="#e8e8e8"/><path d="M3.600 4h9l3 4v20l-3 3h-9z" fill="#c4c4c4" stroke="#707070" stroke-width=".6"/><path d="M3.600 11h4q2 1 0 3.500h-4zM3.600 20h5q2 1.500 0 4h-5z" fill="#f0f0f0" stroke="#606060" stroke-width=".6"/><path d="M36.400 10h-9l-3 4v20l3 4h9z" fill="#c4c4c4" stroke="#707070" stroke-width=".6"/><path d="M36.400 16h-4q-2 1-0 3.500h4zM36.400 25h-5q-2 1.500 0 4h5z" fill="#f0f0f0" stroke="#606060" stroke-width=".6"/><path d="M4.500 1.500Q13 -1 21 .5Q25 4 26 11Q27 22 31 26Q34 29 38 30Q35 37 28 39.500Q21 37 19 31Q16 24 15 17Q14 9 4.500 1.500z" fill="#24202c" stroke="#0c0c10" stroke-width=".8"/><path d="M9 3l10-1.500l4 7l-8 3zM16 14l8-3l2 10l-7 4zM20 28l8-4l6 6l-7 6z" fill="#3c405a"/><path d="M16 14l8-3l1 5l-8 3z" fill="#50587c"/></svg>
<svg style="left:1410px;top:66px" width="40" height="40" viewBox="0 0 40 40"><rect x="0" y=".5" width="3.600" height="31" fill="#303030"/><rect x="36.400" y="9" width="3.600" height="31" fill="#303030"/><rect x="1" y="1.5" width="1.700" height="1.300" fill="#e8e8e8"/><rect x="1" y="4" width="1.700" height="1.300" fill="#e8e8e8"/><rect x="1" y="6.5" width="1.700" height="1.300" fill="#e8e8e8"/><rect x="1" y="9" width="1.700" height="1.300" fill="#e8e8e8"/><rect x="1" y="11.5" width="1.700" height="1.300" fill="#e8e8e8"/><rect x="1" y="14" width="1.700" height="1.300" fill="#e8e8e8"/><rect x="1" y="16.5" width="1.700" height="1.300" fill="#e8e8e8"/><rect x="1" y="19" width="1.700" height="1.300" fill="#e8e8e8"/><rect x="1" y="21.5" width="1.700" height="1.300" fill="#e8e8e8"/><rect x="1" y="24" width="1.700" height="1.300" fill="#e8e8e8"/><rect x="1" y="26.5" width="1.700" height="1.300" fill="#e8e8e8"/><rect x="1" y="29" width="1.700" height="1.300" fill="#e8e8e8"/><rect x="37.400" y="10" width="1.700" height="1.300" fill="#e8e8e8"/><rect x="37.400" y="12.5" width="1.700" height="1.300" fill="#e8e8e8"/><rect x="37.400" y="15" width="1.700" height="1.300" fill="#e8e8e8"/><rect x="37.400" y="17.5" width="1.700" height="1.300" fill="#e8e8e8"/><rect x="37.400" y="20" width="1.700" height="1.300" fill="#e8e8e8"/><rect x="37.400" y="22.5" width="1.700" height="1.300" fill="#e8e8e8"/><rect x="37.400" y="25" width="1.700" height="1.300" fill="#e8e8e8"/><rect x="37.400" y="27.5" width="1.700" height="1.300" fill="#e8e8e8"/><rect x="37.400" y="30" width="1.700" height="1.300" fill="#e8e8e8"/><rect x="37.400" y="32.5" width="1.700" height="1.300" fill="#e8e8e8"/><rect x="37.400" y="35" width="1.700" height="1.300" fill="#e8e8e8"/><rect x="37.400" y="37.5" width="1.700" height="1.300" fill="#e8e8e8"/><path d="M3.600 4h9l3 4v20l-3 3h-9z" fill="#c4c4c4" stroke="#707070" stroke-width=".6"/><path d="M3.600 11h4q2 1 0 3.500h-4zM3.600 20h5q2 1.500 0 4h-5z" fill="#f0f0f0" stroke="#606060" stroke-width=".6"/><path d="M36.400 10h-9l-3 4v20l3 4h9z" fill="#c4c4c4" stroke="#707070" stroke-width=".6"/><path d="M36.400 16h-4q-2 1-0 3.500h4zM36.400 25h-5q-2 1.500 0 4h5z" fill="#f0f0f0" stroke="#606060" stroke-width=".6"/><path d="M4.500 1.500Q13 -1 21 .5Q25 4 26 11Q27 22 31 26Q34 29 38 30Q35 37 28 39.500Q21 37 19 31Q16 24 15 17Q14 9 4.500 1.500z" fill="#d4d4d4" stroke="#383838" stroke-width=".9"/><path d="M9 3l10-1.500l4 7l-8 3zM16 14l8-3l2 10l-7 4zM20 28l8-4l6 6l-7 6z" fill="#fcfcfc" stroke="#b0b8c0" stroke-width=".4"/><path d="M17 18l8-3l1 5l-7 4z" fill="#d8e8f4"/></svg>
<svg style="left:1466px;top:66px" width="40" height="40" viewBox="0 0 40 40"><rect x="0" y=".5" width="3.600" height="31" fill="#303030"/><rect x="36.400" y="9" width="3.600" height="31" fill="#303030"/><rect x="1" y="1.5" width="1.700" height="1.300" fill="#e8e8e8"/><rect x="1" y="4" width="1.700" height="1.300" fill="#e8e8e8"/><rect x="1" y="6.5" width="1.700" height="1.300" fill="#e8e8e8"/><rect x="1" y="9" width="1.700" height="1.300" fill="#e8e8e8"/><rect x="1" y="11.5" width="1.700" height="1.300" fill="#e8e8e8"/><rect x="1" y="14" width="1.700" height="1.300" fill="#e8e8e8"/><rect x="1" y="16.5" width="1.700" height="1.300" fill="#e8e8e8"/><rect x="1" y="19" width="1.700" height="1.300" fill="#e8e8e8"/><rect x="1" y="21.5" width="1.700" height="1.300" fill="#e8e8e8"/><rect x="1" y="24" width="1.700" height="1.300" fill="#e8e8e8"/><rect x="1" y="26.5" width="1.700" height="1.300" fill="#e8e8e8"/><rect x="1" y="29" width="1.700" height="1.300" fill="#e8e8e8"/><rect x="37.400" y="10" width="1.700" height="1.300" fill="#e8e8e8"/><rect x="37.400" y="12.5" width="1.700" height="1.300" fill="#e8e8e8"/><rect x="37.400" y="15" width="1.700" height="1.300" fill="#e8e8e8"/><rect x="37.400" y="17.5" width="1.700" height="1.300" fill="#e8e8e8"/><rect x="37.400" y="20" width="1.700" height="1.300" fill="#e8e8e8"/><rect x="37.400" y="22.5" width="1.700" height="1.300" fill="#e8e8e8"/><rect x="37.400" y="25" width="1.700" height="1.300" fill="#e8e8e8"/><rect x="37.400" y="27.5" width="1.700" height="1.300" fill="#e8e8e8"/><rect x="37.400" y="30" width="1.700" height="1.300" fill="#e8e8e8"/><rect x="37.400" y="32.5" width="1.700" height="1.300" fill="#e8e8e8"/><rect x="37.400" y="35" width="1.700" height="1.300" fill="#e8e8e8"/><rect x="37.400" y="37.5" width="1.700" height="1.300" fill="#e8e8e8"/><path d="M3.600 4h9l3 4v20l-3 3h-9z" fill="#c4c4c4" stroke="#707070" stroke-width=".6"/><path d="M3.600 11h4q2 1 0 3.500h-4zM3.600 20h5q2 1.500 0 4h-5z" fill="#f0f0f0" stroke="#606060" stroke-width=".6"/><path d="M36.400 10h-9l-3 4v20l3 4h9z" fill="#c4c4c4" stroke="#707070" stroke-width=".6"/><path d="M36.400 16h-4q-2 1-0 3.500h4zM36.400 25h-5q-2 1.500 0 4h5z" fill="#f0f0f0" stroke="#606060" stroke-width=".6"/><path d="M4.500 1.500Q13 -1 21 .5Q25 4 26 11Q27 22 31 26Q34 29 38 30Q35 37 28 39.500Q21 37 19 31Q16 24 15 17Q14 9 4.500 1.500z" fill="#181890" stroke="#101050" stroke-width=".8"/><path d="M4.500 1.500Q13 -1 21 .5Q24.500 4 25.500 8.500L16 12.500Q13 6 4.500 1.500z" fill="#e41424" stroke="#801018" stroke-width=".5"/><path d="M13.500 13.500L25.200 9.500Q26.500 18 27.500 20.500L17.500 25.500Q14.500 19 13.500 13.500z" fill="#14c048" stroke="#0a6020" stroke-width=".5"/><path d="M19.500 29.500L29.500 23.500L36 30L27.500 37z" fill="#44a8f8" stroke="#2050d0" stroke-width=".8"/><path d="M21.500 29.500L29 25L31 27L23 32z" fill="#90d4ff"/></svg>
<svg style="left:1515px;top:66px" width="40" height="40" viewBox="0 0 40 40"><rect x="0" y=".5" width="3.600" height="31" fill="#303030"/><rect x="36.400" y="9" width="3.600" height="31" fill="#303030"/><rect x="1" y="1.5" width="1.700" height="1.300" fill="#e8e8e8"/><rect x="1" y="4" width="1.700" height="1.300" fill="#e8e8e8"/><rect x="1" y="6.5" width="1.700" height="1.300" fill="#e8e8e8"/><rect x="1" y="9" width="1.700" height="1.300" fill="#e8e8e8"/><rect x="1" y="11.5" width="1.700" height="1.300" fill="#e8e8e8"/><rect x="1" y="14" width="1.700" height="1.300" fill="#e8e8e8"/><rect x="1" y="16.5" width="1.700" height="1.300" fill="#e8e8e8"/><rect x="1" y="19" width="1.700" height="1.300" fill="#e8e8e8"/><rect x="1" y="21.5" width="1.700" height="1.300" fill="#e8e8e8"/><rect x="1" y="24" width="1.700" height="1.300" fill="#e8e8e8"/><rect x="1" y="26.5" width="1.700" height="1.300" fill="#e8e8e8"/><rect x="1" y="29" width="1.700" height="1.300" fill="#e8e8e8"/><rect x="37.400" y="10" width="1.700" height="1.300" fill="#e8e8e8"/><rect x="37.400" y="12.5" width="1.700" height="1.300" fill="#e8e8e8"/><rect x="37.400" y="15" width="1.700" height="1.300" fill="#e8e8e8"/><rect x="37.400" y="17.5" width="1.700" height="1.300" fill="#e8e8e8"/><rect x="37.400" y="20" width="1.700" height="1.300" fill="#e8e8e8"/><rect x="37.400" y="22.5" width="1.700" height="1.300" fill="#e8e8e8"/><rect x="37.400" y="25" width="1.700" height="1.300" fill="#e8e8e8"/><rect x="37.400" y="27.5" width="1.700" height="1.300" fill="#e8e8e8"/><rect x="37.400" y="30" width="1.700" height="1.300" fill="#e8e8e8"/><rect x="37.400" y="32.5" width="1.700" height="1.300" fill="#e8e8e8"/><rect x="37.400" y="35" width="1.700" height="1.300" fill="#e8e8e8"/><rect x="37.400" y="37.5" width="1.700" height="1.300" fill="#e8e8e8"/><path d="M3.600 4h9l3 4v20l-3 3h-9z" fill="#c4c4c4" stroke="#707070" stroke-width=".6"/><path d="M3.600 11h4q2 1 0 3.500h-4zM3.600 20h5q2 1.500 0 4h-5z" fill="#f0f0f0" stroke="#606060" stroke-width=".6"/><path d="M36.400 10h-9l-3 4v20l3 4h9z" fill="#c4c4c4" stroke="#707070" stroke-width=".6"/><path d="M36.400 16h-4q-2 1-0 3.500h4zM36.400 25h-5q-2 1.500 0 4h5z" fill="#f0f0f0" stroke="#606060" stroke-width=".6"/><path d="M4.500 1.500Q13 -1 21 .5Q25 4 26 11Q27 22 31 26Q34 29 38 30Q35 37 28 39.500Q21 37 19 31Q16 24 15 17Q14 9 4.500 1.500z" fill="#181890" stroke="#101050" stroke-width=".8"/><path d="M4.500 1.500Q13 -1 21 .5Q24.500 4 25.500 8.500L16 12.500Q13 6 4.500 1.500z" fill="#e41424" stroke="#801018" stroke-width=".5"/><path d="M13.500 13.500L25.200 9.500Q26.500 18 27.500 20.500L17.500 25.500Q14.500 19 13.500 13.500z" fill="#14c048" stroke="#0a6020" stroke-width=".5"/><path d="M19.500 29.500L29.500 23.500L36 30L27.500 37z" fill="#44a8f8" stroke="#2050d0" stroke-width=".8"/><path d="M21.500 29.500L29 25L31 27L23 32z" fill="#90d4ff"/></svg>
<svg style="left:1564px;top:67px" width="40" height="40" viewBox="0 0 40 40"><rect width="40" height="40" fill="url(#pur)"/><g stroke="#9050d0" stroke-width=".7" opacity=".7"><path d="M20 20L2 3M20 20L38 4M20 20L3 37M20 20L37 38M20 20L20 1M20 20L20 39M20 20L1 20M20 20L39 20M20 20L9 1M20 20L31 1M20 20L9 39M20 20L31 39M20 20L1 11M20 20L1 29M20 20L39 11M20 20L39 29"/></g><ellipse cx="20" cy="20" rx="5" ry="6.500" fill="#f8c0f8"/><ellipse cx="20" cy="20" rx="2.500" ry="3.500" fill="#e070c0"/></svg>
<div style="left:0px;top:113px;width:1896px;height:895px;background:#787878;"></div>
<div style="left:0px;top:113px;width:1920px;height:1px;background:#a0a0a0;"></div>
<div style="left:0px;top:113px;width:2px;height:895px;background:#9a9a9a;"></div>
<div style="left:1785px;top:329px;width:111px;height:151px;background:#929292;"></div>
<div style="left:0px;top:1004px;width:1896px;height:4px;background:#a8a8a8;"></div>
<div style="left:0px;top:1002px;width:1896px;height:2px;background:#8c8c8c;"></div>
<div style="left:0px;top:477px;width:1786px;height:3px;background:#959595;"></div>
<div style="left:3px;top:118px;width:1151px;height:76px;background:#fff;"></div>
<div style="left:6px;top:122px;width:1146px;height:70px;background:#8e8e8e;"></div>
<div style="left:8px;top:123px;width:1142px;height:67px;background:#ebebeb;"></div>
<div style="left:8px;top:123px;width:1142px;height:9px;background:#8e8e8e;"></div>
<div style="left:8px;top:123px;width:1142px;height:21px;background:linear-gradient(90deg,#e3eaf6,#e8eef8 50%,#eef3fb);border-radius:5px 5px 0 0;"></div>
<div style="left:8px;top:144px;width:1142px;height:1px;background:#adadad;"></div>
<div class="hd" style="left:15px;top:126px;white-space:pre;">View</div>
<div style="left:1156px;top:118px;width:388px;height:76px;background:#fff;"></div>
<div style="left:1159px;top:122px;width:383px;height:70px;background:#8e8e8e;"></div>
<div style="left:1161px;top:123px;width:379px;height:67px;background:#ebebeb;"></div>
<div style="left:1161px;top:123px;width:379px;height:9px;background:#8e8e8e;"></div>
<div style="left:1161px;top:123px;width:379px;height:21px;background:linear-gradient(90deg,#e3eaf6,#e8eef8 50%,#eef3fb);border-radius:5px 5px 0 0;"></div>
<div style="left:1161px;top:144px;width:379px;height:1px;background:#adadad;"></div>
<div class="hd" style="left:1167px;top:126px;white-space:pre;">Sensor</div>
<div style="left:1544px;top:118px;width:154px;height:76px;background:#fff;"></div>
<div style="left:1547px;top:122px;width:149px;height:70px;background:#8e8e8e;"></div>
<div style="left:1549px;top:123px;width:145px;height:67px;background:#ebebeb;"></div>
<div style="left:1549px;top:123px;width:145px;height:9px;background:#8e8e8e;"></div>
<div style="left:1549px;top:123px;width:145px;height:21px;background:linear-gradient(90deg,#e3eaf6,#e8eef8 50%,#eef3fb);border-radius:5px 5px 0 0;"></div>
<div style="left:1549px;top:144px;width:145px;height:1px;background:#adadad;"></div>
<div class="hd" style="left:1555px;top:126px;white-space:pre;">Generator</div>
<div style="left:1699px;top:118px;width:192px;height:76px;background:#fff;"></div>
<div style="left:1702px;top:122px;width:187px;height:70px;background:#8e8e8e;"></div>
<div style="left:1704px;top:123px;width:183px;height:67px;background:#ebebeb;"></div>
<div style="left:1704px;top:123px;width:183px;height:9px;background:#8e8e8e;"></div>
<div style="left:1704px;top:123px;width:183px;height:21px;background:linear-gradient(90deg,#e3eaf6,#e8eef8 50%,#eef3fb);border-radius:5px 5px 0 0;"></div>
<div style="left:1704px;top:144px;width:183px;height:1px;background:#adadad;"></div>
<div class="hd" style="left:1711px;top:126px;white-space:pre;">Parameters</div>
<div style="left:8px;top:150px;width:250px;height:28px;background:#fff;border-top:2px solid #868686;border-left:2px solid #868686;border-right:1px solid #fff;border-bottom:1px solid #fff;"></div>
<div style="left:10px;top:152px;width:247px;height:25px;border-top:1px solid #696969;border-left:1px solid #696969;border-right:1px solid #e3e3e3;border-bottom:1px solid #e3e3e3;background:#fff;"></div>
<div style="left:12px;top:155px;width:222px;height:20px;background:#0078d7;"></div>
<div class="dv" style="left:14px;top:156px;white-space:pre;color:#fff;font-size:15.600px;line-height:20px;">Blue saturation scale</div>
<div style="left:235px;top:154px;width:22px;height:22px;background:#f0f0f0;border-top:1px solid #fff;border-left:1px solid #fff;border-right:2px solid #808080;border-bottom:2px solid #808080;"></div>
<svg style="left:241px;top:163px" width="9" height="5" viewBox="0 0 9 5"><path d="M0 0h9l-4.500 5z" fill="#000"/></svg>
<div style="left:270px;top:148px;width:842px;height:35px;background:#f0f0f0;border-top:1px solid #a0a0a0;border-left:1px solid #a0a0a0;border-right:1px solid #fff;border-bottom:1px solid #fff;"></div>
<div class="ls" style="left:272px;top:149px;white-space:pre;font-size:18.600px;font-weight:bold;line-height:22px;color:#000;transform-origin:0 0;transform:scaleX(1.085);">Color Space: HDTV Rec709 , White Point: D65, EOTF:  SDR, Power law (black compen...</div>
<div style="left:1118px;top:150px;width:21px;height:14px;background:#f0f0f0;border-top:1px solid #fff;border-left:1px solid #fff;border-right:2px solid #848484;border-bottom:2px solid #848484;"></div>
<div style="left:1118px;top:166px;width:21px;height:15px;background:#f0f0f0;border-top:1px solid #fff;border-left:1px solid #fff;border-right:2px solid #848484;border-bottom:2px solid #848484;"></div>
<svg style="left:1124px;top:154px" width="7" height="4" viewBox="0 0 7 4"><path d="M0 4h7l-3.500-4z" fill="#000"/></svg>
<svg style="left:1124px;top:171px" width="7" height="4" viewBox="0 0 7 4"><path d="M0 0h7l-3.500 4z" fill="#000"/></svg>
<div style="left:1163px;top:147px;width:367px;height:16px;background:#f0f0f0;"></div>
<div class="c15" style="left:1165px;top:146px;white-space:pre;">Simulated sensor</div>
<div style="left:1167px;top:168px;width:82px;height:17px;background:#f0f0f0;"></div>
<div class="c15" style="left:1168px;top:167px;white-space:pre;">Adaptive</div>
<svg style="left:1300px;top:170px" width="16" height="15" viewBox="0 0 16 15"><path d="M0 0l15 7.500l-15 7.500z" fill="#7ed63e"/><path d="M0 0l15 7.500" stroke="#a8e878" stroke-width="1"/></svg>
<svg style="left:1505px;top:165px" width="24" height="24" viewBox="0 0 24 24"><path d="M13.300 .8l1.600 .8l.6 18.200l-1.200 .2z" fill="#20386c"/><path d="M.4 2.600l13-2l1.100 19l-13.500 2.400z" fill="#2466c8" stroke="#1c50a8" stroke-width=".8"/><path d="M2.900 5.400l9.100-1.600l.7 13.700l-9.100 2.200z" fill="#dceeff"/><path d="M2.900 5.400l9.100-1.600l.3 6l-9.200 2z" fill="#f8fcff"/><path d="M8 17l4.600-1l.1 1.500l-4.700 1.200z" fill="#70c0f8"/><path d="M4.400 11.200l2.600 3l2.900-8" stroke="#d8b040" stroke-width="1.700" fill="none"/><path d="M12 12.600l7.400-3.200" stroke="#6ca4e0" stroke-width="2.400" stroke-linecap="round"/><path d="M12.500 13.600l7.400-3.200" stroke="#203050" stroke-width=".7" opacity=".6"/><circle cx="19.900" cy="9.100" r="1.600" fill="#d84830"/></svg>
<div style="left:1549px;top:147px;width:132px;height:17px;background:#f0f0f0;"></div>
<div class="c15" style="left:1551px;top:146px;white-space:pre;">GDI</div>
<svg style="left:1668px;top:169px" width="24" height="24" viewBox="0 0 24 24"><path d="M13.300 .8l1.600 .8l.6 18.200l-1.200 .2z" fill="#20386c"/><path d="M.4 2.600l13-2l1.100 19l-13.500 2.400z" fill="#2466c8" stroke="#1c50a8" stroke-width=".8"/><path d="M2.900 5.400l9.100-1.600l.7 13.700l-9.100 2.200z" fill="#dceeff"/><path d="M2.900 5.400l9.100-1.600l.3 6l-9.200 2z" fill="#f8fcff"/><path d="M8 17l4.600-1l.1 1.500l-4.700 1.200z" fill="#70c0f8"/><path d="M4.400 11.200l2.600 3l2.900-8" stroke="#d8b040" stroke-width="1.700" fill="none"/><path d="M12 12.600l7.400-3.200" stroke="#6ca4e0" stroke-width="2.400" stroke-linecap="round"/><path d="M12.500 13.600l7.400-3.200" stroke="#203050" stroke-width=".7" opacity=".6"/><circle cx="19.900" cy="9.100" r="1.600" fill="#d84830"/></svg>
<div style="left:1711px;top:148px;width:121px;height:17px;background:#f0f0f0;"></div>
<div style="left:1711px;top:168px;width:163px;height:19px;background:#f0f0f0;"></div>
<div style="left:1713px;top:149px;width:15px;height:15px;background:#fff;border-top:2px solid #6e6e6e;border-left:2px solid #6e6e6e;border-right:1px solid #f4f4f4;border-bottom:1px solid #f4f4f4;"></div>
<div class="c15" style="left:1736px;top:147px;white-space:pre;">Reference</div>
<div style="left:1713px;top:170px;width:15px;height:15px;background:#ebebeb;border-top:2px solid #6e6e6e;border-left:2px solid #6e6e6e;border-right:1px solid #f4f4f4;border-bottom:1px solid #f4f4f4;"></div>
<div class="c15" style="left:1737px;top:169px;white-space:pre;color:#fff;">XYZ Adjustment</div>
<div class="c15" style="left:1736px;top:168px;white-space:pre;color:#a0a0a0;">XYZ Adjustment</div>
<div style="left:3px;top:199px;width:1782px;height:275px;background:#fff;"></div>
<div style="left:6px;top:203px;width:1777px;height:269px;background:#8e8e8e;"></div>
<div style="left:8px;top:204px;width:1773px;height:266px;background:#ebebeb;"></div>
<div style="left:8px;top:204px;width:1773px;height:9px;background:#8e8e8e;"></div>
<div style="left:8px;top:204px;width:1773px;height:21px;background:linear-gradient(90deg,#e3eaf6,#e8eef8 50%,#eef3fb);border-radius:5px 5px 0 0;"></div>
<div style="left:8px;top:225px;width:1773px;height:1px;background:#adadad;"></div>
<div style="left:3px;top:199px;width:1782px;height:4px;background:#fff;"></div>
<div style="left:6px;top:203px;width:1777px;height:1px;background:#8e8e8e;"></div>
<div style="left:8px;top:204px;width:1773px;height:21px;background:linear-gradient(90deg,#e3eaf6,#e8eef8 50%,#eef3fb);border-radius:5px 5px 0 0;"></div>
<div style="left:3px;top:472px;width:1782px;height:2px;background:#e2e2e2;"></div>
<div style="left:8px;top:224px;width:1773px;height:248px;border:2px solid #e02424;border-top:0;border-radius:0 0 2px 2px;"></div>
<div style="left:1779px;top:210px;width:2px;height:15px;background:#e02424;"></div>
<svg style="left:1760px;top:202px" width="22" height="26" viewBox="0 0 22 26"><path d="M12 2.500q7.500 0 7.500 8" stroke="#e02424" stroke-width="1.600" fill="none"/><path d="M0 22.500h19" stroke="#e02424" stroke-width="1.400"/></svg>
<svg style="left:6px;top:203px" width="10" height="10" viewBox="0 0 10 10"><circle cx="6.500" cy="1.800" r="1" fill="#e02424"/><circle cx="1.800" cy="6.500" r="1" fill="#e02424"/></svg>
<div class="dvb" style="left:19px;top:208.5px;white-space:pre;font-size:11.100px;line-height:15px;color:#4c4c4c;">( Average dE: 5.74 [5.00,2.55,0.71] max: 9.56 [CIE2000] )</div>
<div style="left:11px;top:222px;width:1746px;height:244px;background:#f0f0f0;border-top:1px solid #828282;border-left:1px solid #828282;"></div>
<div style="left:12px;top:223px;width:1745px;height:1px;background:#6a6a6a;"></div>
<div style="left:12px;top:223px;width:1px;height:243px;background:#6a6a6a;"></div>
<div style="left:80px;top:251px;width:1654px;height:192px;background:#fff;"></div>
<div style="left:13px;top:224px;width:67px;height:26px;background:#f0f0f0;"></div>
<div class="rh" style="left:13px;top:229px;white-space:pre;width:66px;">% Sat</div>
<div style="left:80px;top:224px;width:330px;height:26px;background:#f0f0f0;"></div>
<div class="rh" style="left:80px;top:229px;white-space:pre;width:330px;">0</div>
<div style="left:411px;top:224px;width:330px;height:26px;background:#c1c1f2;"></div>
<div class="rh" style="left:411px;top:229px;white-space:pre;width:330px;">25</div>
<div style="left:742px;top:224px;width:331px;height:26px;background:#9191ee;"></div>
<div class="rh" style="left:742px;top:229px;white-space:pre;width:331px;">50</div>
<div style="left:1074px;top:224px;width:329px;height:26px;background:#6161ee;"></div>
<div class="rh" style="left:1074px;top:229px;white-space:pre;width:329px;">75</div>
<div style="left:1404px;top:224px;width:329px;height:26px;background:#3131ea;"></div>
<div class="rh" style="left:1404px;top:229px;white-space:pre;width:329px;">100</div>
<div style="left:13px;top:250px;width:1721px;height:2px;background:#7c7c7c;"></div>
<div style="left:80px;top:252px;width:1654px;height:30px;background:#fff;"></div>
<div style="left:80px;top:282px;width:1654px;height:1px;background:#c4c4c4;"></div>
<div style="left:13px;top:252px;width:66px;height:30px;background:#f0f0f0;"></div>
<div style="left:13px;top:281px;width:66px;height:2px;background:#747474;"></div>
<div class="rh" style="left:13px;top:259px;white-space:pre;width:66px;">x</div>
<div class="num" style="left:80px;top:260px;white-space:pre;width:329px;">0.3137</div>
<div class="num" style="left:411px;top:260px;white-space:pre;width:329px;">0.2669</div>
<div class="num" style="left:742px;top:260px;white-space:pre;width:330px;">0.2234</div>
<div class="num" style="left:1074px;top:260px;white-space:pre;width:328px;">0.1881</div>
<div class="num" style="left:1404px;top:260px;white-space:pre;width:328px;">0.1548</div>
<div style="left:80px;top:283px;width:1654px;height:30px;background:#fff;"></div>
<div style="left:80px;top:313px;width:1654px;height:1px;background:#c4c4c4;"></div>
<div style="left:13px;top:283px;width:66px;height:30px;background:#f0f0f0;"></div>
<div style="left:13px;top:312px;width:66px;height:2px;background:#747474;"></div>
<div class="rh" style="left:13px;top:290px;white-space:pre;width:66px;">y</div>
<div class="num" style="left:80px;top:291px;white-space:pre;width:329px;">0.3253</div>
<div class="num" style="left:411px;top:291px;white-space:pre;width:329px;">0.2494</div>
<div class="num" style="left:742px;top:291px;white-space:pre;width:330px;">0.1760</div>
<div class="num" style="left:1074px;top:291px;white-space:pre;width:328px;">0.1194</div>
<div class="num" style="left:1404px;top:291px;white-space:pre;width:328px;">0.0640</div>
<div style="left:80px;top:314px;width:1654px;height:30px;background:#fff;"></div>
<div style="left:80px;top:344px;width:1654px;height:1px;background:#c4c4c4;"></div>
<div style="left:13px;top:314px;width:66px;height:30px;background:#f0f0f0;"></div>
<div style="left:13px;top:343px;width:66px;height:2px;background:#747474;"></div>
<div class="rh" style="left:13px;top:321px;white-space:pre;width:66px;">Y</div>
<div class="num" style="left:80px;top:322px;white-space:pre;width:329px;">64.655</div>
<div class="num" style="left:411px;top:322px;white-space:pre;width:329px;">52.072</div>
<div class="num" style="left:742px;top:322px;white-space:pre;width:330px;">43.137</div>
<div class="num" style="left:1074px;top:322px;white-space:pre;width:328px;">43.419</div>
<div class="num" style="left:1404px;top:322px;white-space:pre;width:328px;">46.404</div>
<div style="left:80px;top:345px;width:1654px;height:30px;background:#ffabab;"></div>
<div style="left:80px;top:375px;width:1654px;height:1px;background:#c4c4c4;"></div>
<div style="left:13px;top:345px;width:66px;height:30px;background:#f0f0f0;"></div>
<div style="left:13px;top:374px;width:66px;height:2px;background:#747474;"></div>
<div class="rh" style="left:13px;top:352px;white-space:pre;width:66px;">Delta E</div>
<div class="num" style="left:80px;top:353px;white-space:pre;width:329px;font-weight:bold;font-size:14.500px;">9.6</div>
<div class="num" style="left:411px;top:353px;white-space:pre;width:329px;font-weight:bold;font-size:14.500px;">6.7</div>
<div class="num" style="left:742px;top:353px;white-space:pre;width:330px;font-weight:bold;font-size:14.500px;">4.3</div>
<div class="num" style="left:1074px;top:353px;white-space:pre;width:328px;font-weight:bold;font-size:14.500px;">3.9</div>
<div class="num" style="left:1404px;top:353px;white-space:pre;width:328px;font-weight:bold;font-size:14.500px;">4.3</div>
<div style="left:80px;top:376px;width:1654px;height:30px;background:#f0f0f0;"></div>
<div style="left:80px;top:406px;width:1654px;height:1px;background:#c4c4c4;"></div>
<div style="left:13px;top:376px;width:66px;height:30px;background:#f0f0f0;"></div>
<div style="left:13px;top:405px;width:66px;height:2px;background:#747474;"></div>
<div class="rh" style="left:13px;top:383px;white-space:pre;width:66px;">delta xy</div>
<div class="num" style="left:80px;top:384px;white-space:pre;width:329px;">0.0039</div>
<div class="num" style="left:411px;top:384px;white-space:pre;width:329px;">0.0128</div>
<div class="num" style="left:742px;top:384px;white-space:pre;width:330px;">0.0200</div>
<div class="num" style="left:1074px;top:384px;white-space:pre;width:328px;">0.0094</div>
<div class="num" style="left:1404px;top:384px;white-space:pre;width:328px;">0.0063</div>
<div style="left:80px;top:407px;width:1654px;height:30px;background:#e0e0e0;"></div>
<div style="left:80px;top:437px;width:1654px;height:1px;background:#c4c4c4;"></div>
<div style="left:13px;top:407px;width:66px;height:30px;background:#f0f0f0;"></div>
<div style="left:13px;top:436px;width:66px;height:2px;background:#747474;"></div>
<div class="rh" style="left:13px;top:414px;white-space:pre;width:66px;">delta L</div>
<div class="num" style="left:80px;top:415px;white-space:pre;width:329px;">+83.6 %</div>
<div class="num" style="left:411px;top:415px;white-space:pre;width:329px;">+48.9 %</div>
<div class="num" style="left:742px;top:415px;white-space:pre;width:330px;">+22.8 %</div>
<div class="num" style="left:1074px;top:415px;white-space:pre;width:328px;">+23.8 %</div>
<div class="num" style="left:1404px;top:415px;white-space:pre;width:328px;">+34.8 %</div>
<div style="left:80px;top:438px;width:1654px;height:5px;background:#fafafa;"></div>
<div style="left:13px;top:438px;width:66px;height:5px;background:#f0f0f0;"></div>
<div style="left:79px;top:224px;width:2px;height:219px;background:#7c7c7c;"></div>
<div style="left:410px;top:251px;width:1px;height:192px;background:#c4c4c4;"></div>
<div style="left:410px;top:224px;width:1px;height:26px;background:#fff;"></div>
<div style="left:741px;top:251px;width:1px;height:192px;background:#c4c4c4;"></div>
<div style="left:741px;top:224px;width:1px;height:26px;background:#fff;"></div>
<div style="left:1073px;top:251px;width:1px;height:192px;background:#c4c4c4;"></div>
<div style="left:1073px;top:224px;width:1px;height:26px;background:#fff;"></div>
<div style="left:1403px;top:251px;width:1px;height:192px;background:#c4c4c4;"></div>
<div style="left:1403px;top:224px;width:1px;height:26px;background:#fff;"></div>
<div style="left:1733px;top:251px;width:1px;height:192px;background:#c4c4c4;"></div>
<div style="left:1733px;top:224px;width:1px;height:26px;background:#fff;"></div>
<div style="left:1733px;top:224px;width:1px;height:26px;background:#a0a0a0;"></div>
<div style="left:1734px;top:224px;width:22px;height:219px;background:#f0f0f0;"></div>
<div style="left:1736px;top:245px;width:18px;height:174px;background:#cdcdcd;"></div>
<svg style="left:0;top:0" width="1920" height="1080"><path d="M1740 236.25l4.5 -4.5l4.5 4.5" stroke="#5a5a5a" stroke-width="2.3" fill="none"/></svg>
<svg style="left:0;top:0" width="1920" height="1080"><path d="M1740 430.75l4.5 4.5l4.5 -4.5" stroke="#5a5a5a" stroke-width="2.3" fill="none"/></svg>
<div style="left:13px;top:443px;width:1743px;height:23px;background:#f0f0f0;"></div>
<svg style="left:0;top:0" width="1920" height="1080"><path d="M24.25 449.5l-4.5 4.5l4.5 4.5" stroke="#c0c0c0" stroke-width="2.3" fill="none"/></svg>
<svg style="left:0;top:0" width="1920" height="1080"><path d="M1719.75 449.5l4.5 4.5l-4.5 4.5" stroke="#c0c0c0" stroke-width="2.3" fill="none"/></svg>
<div style="left:1786px;top:199px;width:105px;height:130px;background:#fff;"></div>
<div style="left:1789px;top:203px;width:100px;height:124px;background:#8e8e8e;"></div>
<div style="left:1791px;top:204px;width:96px;height:121px;background:#ebebeb;"></div>
<div style="left:1791px;top:204px;width:96px;height:9px;background:#8e8e8e;"></div>
<div style="left:1791px;top:204px;width:96px;height:21px;background:linear-gradient(90deg,#e3eaf6,#e8eef8 50%,#eef3fb);border-radius:5px 5px 0 0;"></div>
<div style="left:1791px;top:225px;width:96px;height:1px;background:#adadad;"></div>
<div class="hd" style="left:1798px;top:207px;white-space:pre;">Display</div>
<div style="left:1797px;top:224.5px;width:84px;height:18px;background:#f0f0f0;"></div>
<svg style="left:1799px;top:226.5px" width="14" height="14" viewBox="0 0 14 14"><circle cx="7" cy="7" r="6" fill="#f0f0f0" stroke="#7a7a7a" stroke-width="1.600"/><path d="M2.800 11.200a6 6 0 0 0 8.400-8.400" stroke="#f8f8f8" stroke-width="1.600" fill="none"/></svg>
<div class="c15" style="left:1822px;top:226.5px;white-space:pre;color:#fff;">Sensor</div>
<div class="c15" style="left:1821px;top:225.5px;white-space:pre;color:#a0a0a0;">Sensor</div>
<div style="left:1797px;top:244.5px;width:84px;height:18px;background:#f0f0f0;"></div>
<svg style="left:1799px;top:246.5px" width="14" height="14" viewBox="0 0 14 14"><circle cx="7" cy="7" r="6" fill="#fff" stroke="#7a7a7a" stroke-width="1.600"/><path d="M2.800 11.200a6 6 0 0 0 8.400-8.400" stroke="#f8f8f8" stroke-width="1.600" fill="none"/></svg>
<div class="c15" style="left:1821px;top:245.5px;white-space:pre;transform-origin:0 0;transform:scaleX(0.9);">RGB</div>
<div style="left:1797px;top:264.5px;width:84px;height:18px;background:#f0f0f0;"></div>
<svg style="left:1799px;top:266.5px" width="14" height="14" viewBox="0 0 14 14"><circle cx="7" cy="7" r="6" fill="#fff" stroke="#7a7a7a" stroke-width="1.600"/><path d="M2.800 11.200a6 6 0 0 0 8.400-8.400" stroke="#f8f8f8" stroke-width="1.600" fill="none"/></svg>
<div class="c15" style="left:1821px;top:265.5px;white-space:pre;transform-origin:0 0;transform:scaleX(0.89);">XYZ</div>
<div style="left:1797px;top:284.5px;width:84px;height:18px;background:#f0f0f0;"></div>
<svg style="left:1799px;top:286.5px" width="14" height="14" viewBox="0 0 14 14"><circle cx="7" cy="7" r="6" fill="#fff" stroke="#7a7a7a" stroke-width="1.600"/><path d="M2.800 11.200a6 6 0 0 0 8.400-8.400" stroke="#f8f8f8" stroke-width="1.600" fill="none"/></svg>
<div class="c15" style="left:1821px;top:285.5px;white-space:pre;transform-origin:0 0;transform:scaleX(0.975);">xyz</div>
<div style="left:1797px;top:303.5px;width:84px;height:17px;background:#f0f0f0;"></div>
<svg style="left:1799px;top:305.5px" width="14" height="14" viewBox="0 0 14 14"><circle cx="7" cy="7" r="6" fill="#fff" stroke="#7a7a7a" stroke-width="1.600"/><path d="M2.800 11.200a6 6 0 0 0 8.400-8.400" stroke="#f8f8f8" stroke-width="1.600" fill="none"/><circle cx="7" cy="7" r="2.500" fill="#000"/></svg>
<div class="c15" style="left:1821px;top:304.5px;white-space:pre;transform-origin:0 0;transform:scaleX(0.907);">xyY</div>
<div style="left:1786px;top:330px;width:103px;height:37px;background:#ebebeb;border-top:2px solid #fff;border-left:2px solid #fff;border-right:1px solid #c4c4c4;border-bottom:1px solid #c4c4c4;"></div>
<div class="c15" style="left:1849px;top:341px;white-space:pre;">Go</div>
<div style="left:1786px;top:368px;width:103px;height:36px;background:#ebebeb;border-top:2px solid #fff;border-left:2px solid #fff;border-right:1px solid #c4c4c4;border-bottom:1px solid #c4c4c4;"></div>
<div class="c15" style="left:1834px;top:377px;white-space:pre;">Delete</div>
<div style="left:1786px;top:405px;width:103px;height:36px;background:#ebebeb;border-top:2px solid #fff;border-left:2px solid #fff;border-right:1px solid #c4c4c4;border-bottom:1px solid #c4c4c4;"></div>
<div class="c15" style="left:1843px;top:414px;white-space:pre;">Refs</div>
<div style="left:1792px;top:333px;width:40px;height:33px;overflow:hidden;"><svg style="left:0;top:-3px" width="40" height="40" viewBox="0 0 40 40"><rect x="0" y=".5" width="3.600" height="31" fill="#303030"/><rect x="36.400" y="9" width="3.600" height="31" fill="#303030"/><rect x="1" y="1.5" width="1.700" height="1.300" fill="#e8e8e8"/><rect x="1" y="4" width="1.700" height="1.300" fill="#e8e8e8"/><rect x="1" y="6.5" width="1.700" height="1.300" fill="#e8e8e8"/><rect x="1" y="9" width="1.700" height="1.300" fill="#e8e8e8"/><rect x="1" y="11.5" width="1.700" height="1.300" fill="#e8e8e8"/><rect x="1" y="14" width="1.700" height="1.300" fill="#e8e8e8"/><rect x="1" y="16.5" width="1.700" height="1.300" fill="#e8e8e8"/><rect x="1" y="19" width="1.700" height="1.300" fill="#e8e8e8"/><rect x="1" y="21.5" width="1.700" height="1.300" fill="#e8e8e8"/><rect x="1" y="24" width="1.700" height="1.300" fill="#e8e8e8"/><rect x="1" y="26.5" width="1.700" height="1.300" fill="#e8e8e8"/><rect x="1" y="29" width="1.700" height="1.300" fill="#e8e8e8"/><rect x="37.400" y="10" width="1.700" height="1.300" fill="#e8e8e8"/><rect x="37.400" y="12.5" width="1.700" height="1.300" fill="#e8e8e8"/><rect x="37.400" y="15" width="1.700" height="1.300" fill="#e8e8e8"/><rect x="37.400" y="17.5" width="1.700" height="1.300" fill="#e8e8e8"/><rect x="37.400" y="20" width="1.700" height="1.300" fill="#e8e8e8"/><rect x="37.400" y="22.5" width="1.700" height="1.300" fill="#e8e8e8"/><rect x="37.400" y="25" width="1.700" height="1.300" fill="#e8e8e8"/><rect x="37.400" y="27.5" width="1.700" height="1.300" fill="#e8e8e8"/><rect x="37.400" y="30" width="1.700" height="1.300" fill="#e8e8e8"/><rect x="37.400" y="32.5" width="1.700" height="1.300" fill="#e8e8e8"/><rect x="37.400" y="35" width="1.700" height="1.300" fill="#e8e8e8"/><rect x="37.400" y="37.5" width="1.700" height="1.300" fill="#e8e8e8"/><path d="M3.600 4h9l3 4v20l-3 3h-9z" fill="#c4c4c4" stroke="#707070" stroke-width=".6"/><path d="M3.600 11h4q2 1 0 3.500h-4zM3.600 20h5q2 1.500 0 4h-5z" fill="#f0f0f0" stroke="#606060" stroke-width=".6"/><path d="M36.400 10h-9l-3 4v20l3 4h9z" fill="#c4c4c4" stroke="#707070" stroke-width=".6"/><path d="M36.400 16h-4q-2 1-0 3.500h4zM36.400 25h-5q-2 1.500 0 4h5z" fill="#f0f0f0" stroke="#606060" stroke-width=".6"/><path d="M4.500 1.500Q13 -1 21 .5Q25 4 26 11Q27 22 31 26Q34 29 38 30Q35 37 28 39.500Q21 37 19 31Q16 24 15 17Q14 9 4.500 1.500z" fill="#1818a0" stroke="#101050" stroke-width=".8"/><path d="M9 3l10-1.500l4 7l-8 3zM16 14l8-3l2 10l-7 4zM20 28l8-4l6 6l-7 6z" fill="#2c78f0" stroke="#2040c0" stroke-width=".5"/><path d="M17 17l7.500-3l1 5l-7 3.500zM22 29l6-3l4 4l-6 4z" fill="#58b8ff"/></svg></div>
<svg style="left:1794px;top:371px" width="36" height="32" viewBox="0 0 36 32"><defs><linearGradient id="bin" x1="0" y1="0" x2="1" y2="1"><stop offset="0" stop-color="#e8f6ff"/><stop offset=".5" stop-color="#a8d4f4"/><stop offset="1" stop-color="#4890d8"/></linearGradient></defs><path d="M1 5l33-4l-3 28q-8 4-22 1z" fill="url(#bin)" stroke="#6aa8e0" stroke-width=".6"/><ellipse cx="20" cy="26" rx="12" ry="3.500" fill="#c0e0f8" opacity=".7"/><path d="M18 13a6 6 0 0 1 10-2l2-2v7h-7l2-2a3.500 3.500 0 0 0-5 1zM29 19a6 6 0 0 1-10 3l-2 2v-7h7l-2 2a3.500 3.500 0 0 0 5-1z" fill="#18a030"/></svg>
<svg style="left:1792px;top:411px" width="41" height="28" viewBox="0 0 41 28"><path d="M.5 28V14.200L2.700 13.100L5.500 13.100L8.700 4.400L11 9L14.200 12L19.100 11L19.100 7.600L23.500 1.100L26.800 3.300L26.800 4.400L31.700 10.900L31.700 12L36 9.800L41 13.100V28z" fill="#ffff00" stroke="#ffff00" stroke-width="1" stroke-linejoin="round"/><path d="M.5 28V15h2.200v13z" fill="#000090"/><path d="M2.700 28V14h2.800v14z" fill="#ff00ff"/><path d="M5.500 28V14L8.700 5.400L11 10V28z" fill="#0000ff"/><path d="M11 28V10L14.200 13V28z" fill="#00ffff"/><path d="M14.200 28V13L19.100 12V28z" fill="#00ff00"/><path d="M26.800 28V5.400L31.700 11.900V28z" fill="#800000"/><path d="M31.700 28V13L36 10.800L41 14.100V28z" fill="#ff0000"/></svg>
<div style="left:1792px;top:448px;width:71px;height:22px;background:#ebebeb;"></div>
<div style="left:1794px;top:451px;width:15px;height:15px;background:#fff;border-top:2px solid #6e6e6e;border-left:2px solid #6e6e6e;border-right:1px solid #f4f4f4;border-bottom:1px solid #f4f4f4;"></div>
<div class="c15" style="left:1816px;top:449px;white-space:pre;">Edit</div>
<div style="left:3px;top:480px;width:478px;height:522px;background:#fff;"></div>
<div style="left:6px;top:484px;width:473px;height:516px;background:#8e8e8e;"></div>
<div style="left:8px;top:485px;width:469px;height:513px;background:#ebebeb;"></div>
<div style="left:8px;top:485px;width:469px;height:9px;background:#8e8e8e;"></div>
<div style="left:8px;top:485px;width:469px;height:21px;background:linear-gradient(90deg,#e3eaf6,#e8eef8 50%,#eef3fb);border-radius:5px 5px 0 0;"></div>
<div style="left:8px;top:506px;width:469px;height:1px;background:#adadad;"></div>
<div class="hd" style="left:15px;top:488px;white-space:pre;">Selected color</div>
<div style="left:18px;top:511px;width:142px;height:18px;background:#f0f0f0;"></div>
<div class="c15" style="left:22px;top:511px;white-space:pre;">RGB Levels</div>
<div style="left:287px;top:510px;width:160px;height:17px;background:#f0f0f0;"></div>
<div class="c15" style="left:301px;top:508px;white-space:pre;">Current Measure</div>
<div style="left:18px;top:542px;width:250px;height:107px;background:#f0f0f0;"></div>
<div style="left:18px;top:596px;width:250px;height:1px;background:repeating-linear-gradient(90deg,#909090 0 3px,transparent 3px 6px);"></div>
<svg style="left:17px;top:630px" width="252" height="20" viewBox="0 0 252 20"><path d="M194 14L199 10.500Q206 7 213 6.500L234 6.500Q244 7.500 250.500 10V14z" fill="#c88c0c" stroke="#181000" stroke-width=".9"/><rect x="0" y="13" width="251" height="6" fill="#000"/></svg>
<div class="se" style="left:219px;top:619px;white-space:pre;font-size:15.500px;line-height:16px;color:#282828;">dE 0.0</div>
<div style="left:20px;top:667px;width:240px;height:92px;background:#f0f0f0;"></div>
<div class="ls" style="left:29px;top:666.9px;white-space:pre;width:100px;text-align:center;font-size:16.300px;line-height:19.700px;font-weight:bold;color:#000;transform:scaleX(1.06);">No
Measure</div>
<div class="ls" style="left:149px;top:666.9px;white-space:pre;width:100px;text-align:center;font-size:16.300px;line-height:19.700px;font-weight:bold;color:#000;transform:scaleX(1.06);">No
Measure</div>
<div style="left:22px;top:779px;width:52px;height:17px;background:#f0f0f0;"></div>
<div class="c15" style="left:23px;top:777px;white-space:pre;">Target</div>
<div style="left:62px;top:797px;width:146px;height:112px;background:#000;"></div>
<div style="left:63px;top:798px;width:144px;height:110px;background:conic-gradient(from 0deg at 50% 50%, #48ff00 0deg, #a8e800 30deg, #ffd000 52deg, #ff6000 70deg, #ff0000 92deg, #ff0070 120deg, #f000a0 135deg, #8000e0 180deg, #3000f0 215deg, #0000ff 235deg, #0060c0 258deg, #0090a0 275deg, #00e070 300deg, #00ff50 312deg, #48ff00 360deg);"></div>
<svg style="left:62px;top:797px" width="146" height="112" viewBox="0 0 146 112">
<rect x="22.500" y="17.500" width="101" height="77" rx="12" fill="#c00000" stroke="#fff" stroke-width="1.200"/>
<g fill="none" stroke-width="1">
<g stroke="#40d060"><path d="M34 37q4-8 14-12M39 40q4-7 12-11M44 43q3-6 10-9M49 46q3-5 8-7M54 49q2-4 6-5M59 52q2-3 4-4"/></g>
<g stroke="#ffa020"><path d="M98 24q8 4 13 12M95 28q8 4 11 11M92 32q6 3 9 9M88 36q6 3 8 8M84 40q4 2 6 6M80 44q3 2 4 4"/></g>
<g stroke="#3050ff"><path d="M34 71q6 8 14 12M39 68q4 7 12 11M44 65q4 6 10 9M49 62q3 5 8 7M54 59q2 4 6 5M59 56q2 3 4 4"/></g>
<g stroke="#ff1090"><path d="M98 86q8-4 13-12M95 82q8-4 11-11M92 78q6-3 9-9M88 74q6-3 8-8M84 70q4-2 6-6M80 66q3-2 4-4"/></g>
</g>
<path d="M69 52l8 8M77 52l-8 8" stroke="#fff" stroke-width="1.200"/><path d="M62 56.500h22M73.500 47v18" stroke="#000" stroke-width=".9"/><circle cx="73.500" cy="56.500" r="1.600" fill="#000"/></svg>
<div style="left:276px;top:538px;width:190px;height:451px;background:#f0f0f0;border-top:1px solid #828282;border-left:1px solid #828282;"></div>
<div style="left:277px;top:539px;width:189px;height:1px;background:#6a6a6a;"></div>
<div style="left:277px;top:539px;width:1px;height:450px;background:#6a6a6a;"></div>
<div style="left:278px;top:540px;width:188px;height:449px;overflow:hidden;">
<div style="left:0px;top:0px;width:65px;height:28px;background:#f0f0f0;"></div>
<div style="left:0px;top:27px;width:65px;height:2px;background:#747474;"></div>
<div style="left:66px;top:0px;width:100px;height:28px;background:#fff;"></div>
<div style="left:66px;top:28px;width:100px;height:1px;background:#c4c4c4;"></div>
<div class="rh" style="left:0px;top:7px;white-space:pre;width:64px;">Y cd/m²</div>
<div style="left:0px;top:29px;width:65px;height:27px;background:#f0f0f0;"></div>
<div style="left:0px;top:55px;width:65px;height:2px;background:#747474;"></div>
<div style="left:66px;top:29px;width:100px;height:27px;background:#fff;"></div>
<div style="left:66px;top:56px;width:100px;height:1px;background:#c4c4c4;"></div>
<div class="rh" style="left:0px;top:36px;white-space:pre;width:64px;">Y ftL</div>
<div style="left:0px;top:57px;width:65px;height:28px;background:#f0f0f0;"></div>
<div style="left:0px;top:84px;width:65px;height:2px;background:#747474;"></div>
<div style="left:66px;top:57px;width:100px;height:28px;background:#fff;"></div>
<div style="left:66px;top:85px;width:100px;height:1px;background:#c4c4c4;"></div>
<div class="rh" style="left:0px;top:64px;white-space:pre;width:64px;">T°</div>
<div style="left:0px;top:86px;width:65px;height:28px;background:#f0f0f0;"></div>
<div style="left:0px;top:113px;width:65px;height:2px;background:#747474;"></div>
<div style="left:66px;top:86px;width:100px;height:28px;background:#e0e0e0;"></div>
<div style="left:66px;top:114px;width:100px;height:1px;background:#c4c4c4;"></div>
<div class="rh" style="left:0px;top:93px;white-space:pre;width:64px;">X</div>
<div style="left:0px;top:115px;width:65px;height:28px;background:#f0f0f0;"></div>
<div style="left:0px;top:142px;width:65px;height:2px;background:#747474;"></div>
<div style="left:66px;top:115px;width:100px;height:28px;background:#e0e0e0;"></div>
<div style="left:66px;top:143px;width:100px;height:1px;background:#c4c4c4;"></div>
<div class="rh" style="left:0px;top:122px;white-space:pre;width:64px;">Y</div>
<div style="left:0px;top:144px;width:65px;height:27px;background:#f0f0f0;"></div>
<div style="left:0px;top:170px;width:65px;height:2px;background:#747474;"></div>
<div style="left:66px;top:144px;width:100px;height:27px;background:#e0e0e0;"></div>
<div style="left:66px;top:171px;width:100px;height:1px;background:#c4c4c4;"></div>
<div class="rh" style="left:0px;top:151px;white-space:pre;width:64px;">Z</div>
<div style="left:0px;top:172px;width:65px;height:28px;background:#f0f0f0;"></div>
<div style="left:0px;top:199px;width:65px;height:2px;background:#747474;"></div>
<div style="left:66px;top:172px;width:100px;height:28px;background:#fff;"></div>
<div style="left:66px;top:200px;width:100px;height:1px;background:#c4c4c4;"></div>
<div class="rh" style="left:0px;top:179px;white-space:pre;width:64px;">R</div>
<div style="left:0px;top:201px;width:65px;height:28px;background:#f0f0f0;"></div>
<div style="left:0px;top:228px;width:65px;height:2px;background:#747474;"></div>
<div style="left:66px;top:201px;width:100px;height:28px;background:#fff;"></div>
<div style="left:66px;top:229px;width:100px;height:1px;background:#c4c4c4;"></div>
<div class="rh" style="left:0px;top:208px;white-space:pre;width:64px;">G</div>
<div style="left:0px;top:230px;width:65px;height:27px;background:#f0f0f0;"></div>
<div style="left:0px;top:256px;width:65px;height:2px;background:#747474;"></div>
<div style="left:66px;top:230px;width:100px;height:27px;background:#fff;"></div>
<div style="left:66px;top:257px;width:100px;height:1px;background:#c4c4c4;"></div>
<div class="rh" style="left:0px;top:237px;white-space:pre;width:64px;">B</div>
<div style="left:0px;top:258px;width:65px;height:28px;background:#f0f0f0;"></div>
<div style="left:0px;top:285px;width:65px;height:2px;background:#747474;"></div>
<div style="left:66px;top:258px;width:100px;height:28px;background:#e0e0e0;"></div>
<div style="left:66px;top:286px;width:100px;height:1px;background:#c4c4c4;"></div>
<div class="rh" style="left:0px;top:265px;white-space:pre;width:64px;">x</div>
<div style="left:0px;top:287px;width:65px;height:28px;background:#f0f0f0;"></div>
<div style="left:0px;top:314px;width:65px;height:2px;background:#747474;"></div>
<div style="left:66px;top:287px;width:100px;height:28px;background:#e0e0e0;"></div>
<div style="left:66px;top:315px;width:100px;height:1px;background:#c4c4c4;"></div>
<div class="rh" style="left:0px;top:294px;white-space:pre;width:64px;">y</div>
<div style="left:0px;top:316px;width:65px;height:27px;background:#f0f0f0;"></div>
<div style="left:0px;top:342px;width:65px;height:2px;background:#747474;"></div>
<div style="left:66px;top:316px;width:100px;height:27px;background:#e0e0e0;"></div>
<div style="left:66px;top:343px;width:100px;height:1px;background:#c4c4c4;"></div>
<div class="rh" style="left:0px;top:323px;white-space:pre;width:64px;">Y</div>
<div style="left:0px;top:344px;width:65px;height:28px;background:#f0f0f0;"></div>
<div style="left:0px;top:371px;width:65px;height:2px;background:#747474;"></div>
<div style="left:66px;top:344px;width:100px;height:28px;background:#fff;"></div>
<div style="left:66px;top:372px;width:100px;height:1px;background:#c4c4c4;"></div>
<div class="rh" style="left:0px;top:351px;white-space:pre;width:64px;">x</div>
<div style="left:0px;top:373px;width:65px;height:28px;background:#f0f0f0;"></div>
<div style="left:0px;top:400px;width:65px;height:2px;background:#747474;"></div>
<div style="left:66px;top:373px;width:100px;height:28px;background:#fff;"></div>
<div style="left:66px;top:401px;width:100px;height:1px;background:#c4c4c4;"></div>
<div class="rh" style="left:0px;top:380px;white-space:pre;width:64px;">y</div>
<div style="left:0px;top:402px;width:65px;height:27px;background:#f0f0f0;"></div>
<div style="left:0px;top:428px;width:65px;height:2px;background:#747474;"></div>
<div style="left:66px;top:402px;width:100px;height:27px;background:#fff;"></div>
<div style="left:66px;top:429px;width:100px;height:1px;background:#c4c4c4;"></div>
<div class="rh" style="left:0px;top:409px;white-space:pre;width:64px;">z</div>
<div style="left:0px;top:430px;width:65px;height:28px;background:#f0f0f0;"></div>
<div style="left:0px;top:457px;width:65px;height:2px;background:#747474;"></div>
<div style="left:66px;top:430px;width:100px;height:28px;background:#e0e0e0;"></div>
<div style="left:66px;top:458px;width:100px;height:1px;background:#c4c4c4;"></div>
<div class="rh" style="left:0px;top:437px;white-space:pre;width:64px;">L</div>
<div style="left:64px;top:0px;width:2px;height:449px;background:#7c7c7c;"></div>
<div style="left:165px;top:0px;width:1px;height:448px;background:#c4c4c4;"></div>
<div style="left:166px;top:0px;width:22px;height:448px;background:#f0f0f0;"></div>
<div style="left:167px;top:21px;width:18px;height:262px;background:#cdcdcd;"></div>
</div>
<svg style="left:0;top:0" width="1920" height="1080"><path d="M450 552.75l4.5 -4.5l4.5 4.5" stroke="#5a5a5a" stroke-width="2.3" fill="none"/></svg>
<svg style="left:0;top:0" width="1920" height="1080"><path d="M450 975.75l4.5 4.5l4.5 -4.5" stroke="#5a5a5a" stroke-width="2.3" fill="none"/></svg>
<div style="left:1889px;top:480px;width:7px;height:528px;background:linear-gradient(#787878,#808080 40%,#a6a6a6 90%);"></div>
<div style="left:485px;top:480px;width:1406px;height:522px;background:#fff;"></div>
<div style="left:488px;top:484px;width:1401px;height:516px;background:#8e8e8e;"></div>
<div style="left:490px;top:485px;width:1397px;height:513px;background:#ebebeb;"></div>
<div style="left:490px;top:485px;width:1397px;height:9px;background:#8e8e8e;"></div>
<div style="left:490px;top:485px;width:1397px;height:21px;background:linear-gradient(90deg,#e3eaf6,#e8eef8 50%,#eef3fb);border-radius:5px 5px 0 0;"></div>
<div style="left:490px;top:506px;width:1397px;height:1px;background:#adadad;"></div>
<div class="hd" style="left:498px;top:488px;white-space:pre;">Information</div>
<div style="left:495px;top:512px;width:377px;height:27px;background:#fff;border-top:2px solid #868686;border-left:2px solid #868686;border-right:1px solid #fff;border-bottom:1px solid #fff;"></div>
<div style="left:497px;top:514px;width:374px;height:24px;border-top:1px solid #696969;border-left:1px solid #696969;border-right:1px solid #e3e3e3;border-bottom:1px solid #e3e3e3;background:#fff;"></div>
<div class="c15" style="left:501px;top:517px;white-space:pre;font-size:15.350px;">RGB Levels</div>
<div style="left:850px;top:516px;width:21px;height:21px;background:#f0f0f0;border-top:1px solid #fff;border-left:1px solid #fff;border-right:2px solid #808080;border-bottom:2px solid #808080;"></div>
<svg style="left:856px;top:524px" width="9" height="5" viewBox="0 0 9 5"><path d="M0 0h9l-4.500 5z" fill="#000"/></svg>
<div style="left:498px;top:550px;width:1389px;height:440px;background:#fff;border-top:2px solid #868686;border-left:2px solid #868686;"></div>
<div style="left:500px;top:552px;width:1385px;height:435px;border-top:2px solid #696969;border-left:2px solid #696969;border-right:2px solid #e3e3e3;border-bottom:2px solid #e3e3e3;background:#f0f0f0;"></div>
<svg style="left:502px;top:554px" width="1381" height="432" viewBox="0 0 1381 432"><defs><linearGradient id="cbg" x1="0" y1="0" x2="1" y2="0"><stop offset="0" stop-color="#202020"/><stop offset="1" stop-color="#ffffff"/></linearGradient><clipPath id="cc"><rect x="0" y="0" width="1381" height="432"/></clipPath></defs><rect width="1381" height="432" fill="url(#cbg)"/><rect x="138" y="0" width="1.500" height="432" fill="#0c4343"/><rect x="276" y="0" width="1.500" height="432" fill="#0c4343"/><rect x="414" y="0" width="1.500" height="432" fill="#0c4343"/><rect x="552" y="0" width="1.500" height="432" fill="#0c4343"/><rect x="690" y="0" width="1.500" height="432" fill="#0c4343"/><rect x="828" y="0" width="1.500" height="432" fill="#0c4343"/><rect x="966" y="0" width="1.500" height="432" fill="#0c4343"/><rect x="1104" y="0" width="1.500" height="432" fill="#0c4343"/><rect x="1242" y="0" width="1.500" height="432" fill="#0c4343"/><rect x="0" y="0" width="1.500" height="432" fill="#0c4343"/><rect x="2" y="20.75" width="1379" height="1.500" fill="#0c4343"/><rect x="2" y="42.35" width="1379" height="1.500" fill="#0c4343"/><rect x="2" y="63.95" width="1379" height="1.500" fill="#0c4343"/><rect x="2" y="85.55" width="1379" height="1.500" fill="#0c4343"/><rect x="2" y="128.75" width="1379" height="1.500" fill="#0c4343"/><rect x="2" y="150.35" width="1379" height="1.500" fill="#0c4343"/><rect x="2" y="171.95" width="1379" height="1.500" fill="#0c4343"/><rect x="2" y="193.55" width="1379" height="1.500" fill="#0c4343"/><rect x="2" y="258.25" width="1379" height="1.500" fill="#0c4343"/><rect x="2" y="302.25" width="1379" height="1.500" fill="#0c4343"/><rect x="2" y="345.05" width="1379" height="1.500" fill="#0c4343"/><rect x="2" y="388.35" width="1379" height="1.500" fill="#0c4343"/><rect x="2" y="107.15" width="1379" height="1.500" fill="#0c4343"/><path d="M0 107.8h1381" stroke="#f0f0f0" stroke-width="1.300" stroke-dasharray="4 3.400" stroke-dashoffset="-2"/><rect x="0" y="102.95" width="5" height="10" fill="#f4f4f4"/><text x="2.800" y="15.9" font-family="Liberation Serif" font-size="18" fill="#d2d2d2">140%</text><text x="2.800" y="37.4" font-family="Liberation Serif" font-size="18" fill="#d2d2d2">130%</text><text x="2.800" y="59" font-family="Liberation Serif" font-size="18" fill="#d2d2d2">120%</text><text x="2.800" y="80.6" font-family="Liberation Serif" font-size="18" fill="#d2d2d2">110%</text><text x="2.800" y="102.2" font-family="Liberation Serif" font-size="18" fill="#d2d2d2">100%</text><text x="2.800" y="123.8" font-family="Liberation Serif" font-size="18" fill="#d2d2d2">90%</text><text x="2.800" y="145.4" font-family="Liberation Serif" font-size="18" fill="#d2d2d2">80%</text><text x="2.800" y="167" font-family="Liberation Serif" font-size="18" fill="#d2d2d2">70%</text><text x="2.800" y="188.6" font-family="Liberation Serif" font-size="18" fill="#d2d2d2">60%</text><text x="2.800" y="252.9" font-family="Liberation Serif" font-size="18" fill="#d2d2d2">8</text><text x="2.800" y="296.4" font-family="Liberation Serif" font-size="18" fill="#d2d2d2">6</text><text x="2.800" y="339.4" font-family="Liberation Serif" font-size="18" fill="#d2d2d2">4</text><text x="2.800" y="382.9" font-family="Liberation Serif" font-size="18" fill="#d2d2d2">2</text><text x="141.5" y="211" font-family="Liberation Serif" font-size="17.100" fill="#d7d7d7">10% White</text><text x="141.5" y="427.3" font-family="Liberation Serif" font-size="17.100" fill="#d7d7d7">10% White</text><text x="279.45" y="211" font-family="Liberation Serif" font-size="17.100" fill="#bfbfbf">20% White</text><text x="279.45" y="427.3" font-family="Liberation Serif" font-size="17.100" fill="#bfbfbf">20% White</text><text x="417.4" y="211" font-family="Liberation Serif" font-size="17.100" fill="#a7a7a7">30% White</text><text x="417.4" y="427.3" font-family="Liberation Serif" font-size="17.100" fill="#a7a7a7">30% White</text><text x="555.35" y="211" font-family="Liberation Serif" font-size="17.100" fill="#8f8f8f">40% White</text><text x="555.35" y="427.3" font-family="Liberation Serif" font-size="17.100" fill="#8f8f8f">40% White</text><text x="693.3" y="211" font-family="Liberation Serif" font-size="17.100" fill="#878787">50% White</text><text x="693.3" y="427.3" font-family="Liberation Serif" font-size="17.100" fill="#878787">50% White</text><text x="831.25" y="211" font-family="Liberation Serif" font-size="17.100" fill="#666666">60% White</text><text x="831.25" y="427.3" font-family="Liberation Serif" font-size="17.100" fill="#666666">60% White</text><text x="969.2" y="211" font-family="Liberation Serif" font-size="17.100" fill="#4c4c4c">70% White</text><text x="969.2" y="427.3" font-family="Liberation Serif" font-size="17.100" fill="#4c4c4c">70% White</text><text x="1107.15" y="211" font-family="Liberation Serif" font-size="17.100" fill="#333333">80% White</text><text x="1107.15" y="427.3" font-family="Liberation Serif" font-size="17.100" fill="#333333">80% White</text><text x="1245.1" y="211" font-family="Liberation Serif" font-size="17.100" fill="#191919">90% White</text><text x="1245.1" y="427.3" font-family="Liberation Serif" font-size="17.100" fill="#191919">90% White</text><text x="577.5" y="16.7" font-family="Liberation Sans" font-weight="bold" font-size="17.300" textLength="255" lengthAdjust="spacingAndGlyphs" fill="#dcd400" fill-opacity=".85">Gray Scale Balance w/gamma</text><text x="1174.5" y="379.8" font-family="Liberation Sans" font-weight="bold" font-size="20" fill="#969696">hcfr.sourceforge.net</text><g clip-path="url(#cc)"><polyline points="415.0,-104.0 485.6,22.0 554.2,-10.3 624.0,-17.0 693.0,43.6 755.6,62.2 825.5,68.0 894.2,74.0 964.3,82.4 1033.0,82.4 1103.2,94.4 1171.9,97.6 1241.8,99.8 1310.4,100.6 1380.0,115.5" fill="none" stroke="#ff0000" stroke-width="2.2" stroke-linejoin="round"/><rect x="410" y="-108" width="9" height="9" fill="#ff0000"/><rect x="481" y="18" width="9" height="9" fill="#ff0000"/><rect x="550" y="-15" width="9" height="9" fill="#ff0000"/><rect x="620" y="-22" width="9" height="9" fill="#ff0000"/><rect x="688" y="39" width="9" height="9" fill="#ff0000"/><rect x="751" y="58" width="9" height="9" fill="#ff0000"/><rect x="821" y="64" width="9" height="9" fill="#ff0000"/><rect x="890" y="70" width="9" height="9" fill="#ff0000"/><rect x="960" y="78" width="9" height="9" fill="#ff0000"/><rect x="1028" y="78" width="9" height="9" fill="#ff0000"/><rect x="1099" y="90" width="9" height="9" fill="#ff0000"/><rect x="1167" y="93" width="9" height="9" fill="#ff0000"/><rect x="1237" y="95" width="9" height="9" fill="#ff0000"/><rect x="1306" y="96" width="9" height="9" fill="#ff0000"/><rect x="1376" y="111" width="9" height="9" fill="#ff0000"/></g><g clip-path="url(#cc)"><polyline points="415.0,-77.0 485.6,37.0 554.2,6.0 624.0,2.0 693.0,58.0 755.6,74.8 825.5,77.1 894.2,82.0 964.3,90.9 1033.0,93.2 1103.2,106.3 1171.9,107.2 1241.8,111.3 1310.4,109.5 1380.0,108.3" fill="none" stroke="#00ff00" stroke-width="2.2" stroke-linejoin="round"/><rect x="410" y="-82" width="9" height="9" fill="#00ff00"/><rect x="481" y="32" width="9" height="9" fill="#00ff00"/><rect x="550" y="2" width="9" height="9" fill="#00ff00"/><rect x="620" y="-2" width="9" height="9" fill="#00ff00"/><rect x="688" y="54" width="9" height="9" fill="#00ff00"/><rect x="751" y="70" width="9" height="9" fill="#00ff00"/><rect x="821" y="73" width="9" height="9" fill="#00ff00"/><rect x="890" y="78" width="9" height="9" fill="#00ff00"/><rect x="960" y="86" width="9" height="9" fill="#00ff00"/><rect x="1028" y="89" width="9" height="9" fill="#00ff00"/><rect x="1099" y="102" width="9" height="9" fill="#00ff00"/><rect x="1167" y="103" width="9" height="9" fill="#00ff00"/><rect x="1237" y="107" width="9" height="9" fill="#00ff00"/><rect x="1306" y="105" width="9" height="9" fill="#00ff00"/><rect x="1376" y="104" width="9" height="9" fill="#00ff00"/></g><g clip-path="url(#cc)"><polyline points="415.0,-86.0 485.6,24.5 554.2,-6.2 624.0,-15.6 693.0,42.2 755.6,59.8 825.5,60.8 894.2,65.8 964.3,72.3 1033.0,72.3 1103.2,84.7 1171.9,82.4 1241.8,84.7 1310.4,83.5 1380.0,81.2" fill="none" stroke="#0000ff" stroke-width="2.2" stroke-linejoin="round"/><rect x="410" y="-90" width="9" height="9" fill="#0000ff"/><rect x="481" y="20" width="9" height="9" fill="#0000ff"/><rect x="550" y="-11" width="9" height="9" fill="#0000ff"/><rect x="620" y="-20" width="9" height="9" fill="#0000ff"/><rect x="688" y="38" width="9" height="9" fill="#0000ff"/><rect x="751" y="55" width="9" height="9" fill="#0000ff"/><rect x="821" y="56" width="9" height="9" fill="#0000ff"/><rect x="890" y="61" width="9" height="9" fill="#0000ff"/><rect x="960" y="68" width="9" height="9" fill="#0000ff"/><rect x="1028" y="68" width="9" height="9" fill="#0000ff"/><rect x="1099" y="80" width="9" height="9" fill="#0000ff"/><rect x="1167" y="78" width="9" height="9" fill="#0000ff"/><rect x="1237" y="80" width="9" height="9" fill="#0000ff"/><rect x="1306" y="79" width="9" height="9" fill="#0000ff"/><rect x="1376" y="77" width="9" height="9" fill="#0000ff"/></g><g clip-path="url(#cc)"><polyline points="69.3,368.5 138.0,263.5 208.0,238.0 276.8,255.2 346.7,232.2 415.0,220.3 485.6,315.2 554.2,243.5 624.0,220.5 693.0,303.5 755.6,327.2 825.5,329.8 894.2,334.7 964.3,332.7 1033.0,317.2 1103.2,313.0 1171.9,301.0 1241.8,293.5 1310.4,289.8 1380.0,296.0" fill="none" stroke="#ff00ff" stroke-width="2.2" stroke-linejoin="round"/><rect x="64" y="364" width="10" height="10" fill="#ff00ff"/><rect x="133" y="258" width="10" height="10" fill="#ff00ff"/><rect x="203" y="233" width="10" height="10" fill="#ff00ff"/><rect x="272" y="250" width="10" height="10" fill="#ff00ff"/><rect x="342" y="227" width="10" height="10" fill="#ff00ff"/><rect x="410" y="215" width="10" height="10" fill="#ff00ff"/><rect x="481" y="310" width="10" height="10" fill="#ff00ff"/><rect x="549" y="238" width="10" height="10" fill="#ff00ff"/><rect x="619" y="216" width="10" height="10" fill="#ff00ff"/><rect x="688" y="298" width="10" height="10" fill="#ff00ff"/><rect x="751" y="322" width="10" height="10" fill="#ff00ff"/><rect x="820" y="325" width="10" height="10" fill="#ff00ff"/><rect x="889" y="330" width="10" height="10" fill="#ff00ff"/><rect x="959" y="328" width="10" height="10" fill="#ff00ff"/><rect x="1028" y="312" width="10" height="10" fill="#ff00ff"/><rect x="1098" y="308" width="10" height="10" fill="#ff00ff"/><rect x="1167" y="296" width="10" height="10" fill="#ff00ff"/><rect x="1237" y="288" width="10" height="10" fill="#ff00ff"/><rect x="1305" y="285" width="10" height="10" fill="#ff00ff"/><rect x="1375" y="291" width="10" height="10" fill="#ff00ff"/></g></svg>
<div style="left:1896px;top:114px;width:24px;height:894px;background:#f0f0f0;"></div>
<div style="left:1896px;top:114px;width:1px;height:894px;background:#fdfdfd;"></div>
<div style="left:1898px;top:136px;width:18px;height:823px;background:#cdcdcd;"></div>
<svg style="left:0;top:0" width="1920" height="1080"><path d="M1901.5 129l5 -5l5 5" stroke="#5a5a5a" stroke-width="2.4" fill="none"/></svg>
<svg style="left:0;top:0" width="1920" height="1080"><path d="M1901.5 994l5 5l5 -5" stroke="#5a5a5a" stroke-width="2.4" fill="none"/></svg>
<div style="left:0px;top:1008px;width:1920px;height:21px;background:#f0f0f0;"></div>
<div style="left:24px;top:1009px;width:1811px;height:18px;background:#a6a6a6;"></div>
<svg style="left:0;top:0" width="1920" height="1080"><path d="M14 1013l-5 5l5 5" stroke="#5a5a5a" stroke-width="2.4" fill="none"/></svg>
<svg style="left:0;top:0" width="1920" height="1080"><path d="M1883.5 1013l5 5l-5 5" stroke="#5a5a5a" stroke-width="2.4" fill="none"/></svg>
<div style="left:0px;top:1029px;width:1920px;height:4px;background:#f6f6f6;"></div>
<div style="left:0px;top:1033px;width:1920px;height:23px;background:#f0f0f0;"></div>
<div style="left:0px;top:1033px;width:1920px;height:1px;background:#2a2a2a;"></div>
<div style="left:0px;top:1033px;width:68px;height:23px;background:#f0f0f0;border:1px solid #000;border-left:0;"></div>
<div style="left:1px;top:1034px;width:21px;height:21px;background:#f0f0f0;border-top:1px solid #fff;border-left:1px solid #fff;border-right:1px solid #a0a0a0;border-bottom:1px solid #a0a0a0;"></div>
<div style="left:23px;top:1034px;width:20px;height:21px;background:#f0f0f0;border-top:1px solid #fff;border-left:1px solid #fff;border-right:1px solid #a0a0a0;border-bottom:1px solid #a0a0a0;"></div>
<div style="left:44px;top:1034px;width:22px;height:21px;background:#f0f0f0;border-top:1px solid #fff;border-left:1px solid #fff;border-right:1px solid #a0a0a0;border-bottom:1px solid #a0a0a0;"></div>
<svg style="left:0;top:0" width="1920" height="1080"><path d="M7 1039l9 10M16 1039l-9 10" stroke="#000" stroke-width="1.500" fill="none"/><path d="M36 1039.500v9l-5-4.500z" fill="#000"/><path d="M52 1039.500v9l5-4.500z" fill="#000"/><path d="M68 1033.500L78 1055.500H149.500L159.500 1033.500z" fill="#fff"/><path d="M68 1033.500L78 1055.500H149.500" stroke="#000" stroke-width="1" fill="none"/><path d="M149.500 1055.500L159.500 1033.500" stroke="#000" stroke-width="1" fill="none"/><path d="M154 1049l3 6.500H233.5L238.5 1045.500L233 1033.500" stroke="#000" stroke-width="1" fill="none"/><path d="M234 1049l3 6.500H301L306 1045.500L300.5 1033.500" stroke="#000" stroke-width="1" fill="none"/><path d="M301.500 1049l3 6.500H393.500L403 1033.500" stroke="#000" stroke-width="1" fill="none"/></svg>
<div class="ls" style="left:84px;top:1036.6px;white-space:pre;font-size:12.200px;font-weight:bold;line-height:16px;color:#000;transform-origin:0 0;transform:scaleX(1.09);">Measures</div>
<div class="ls" style="left:167.5px;top:1036.6px;white-space:pre;font-size:11.700px;line-height:16px;color:#2f4263;">Luminance</div>
<div class="ls" style="left:250px;top:1036.6px;white-space:pre;font-size:11.700px;line-height:16px;color:#2f4263;">Gamma</div>
<div class="ls" style="left:319px;top:1036.6px;white-space:pre;font-size:11.700px;line-height:16px;color:#2f4263;">RGB Levels</div>
<svg style="left:1709px;top:1035px" width="18" height="18" viewBox="0 0 18 18"><path d="M1 1h16v9l-1 6h-5l-1-4h-2l-1 4h-4l-2-6z" fill="#7c7c00" stroke="#202000" stroke-width="1"/><rect x="8" y="3" width="6" height="6" fill="#e01818"/><path d="M3 5q3-3 7 0" stroke="#fff" stroke-width="1.300" fill="none"/><path d="M10 11h6l-1 4h-4z" fill="#f8f000"/></svg>
<div style="left:1828px;top:1036px;width:15px;height:15px;background:#fff;border-top:2px solid #6e6e6e;border-left:2px solid #6e6e6e;border-right:1px solid #f4f4f4;border-bottom:1px solid #f4f4f4;"></div>
<div class="ls" style="left:1850px;top:1036px;white-space:pre;font-size:13.700px;line-height:17px;">Reference</div>
<div style="left:0px;top:1056px;width:1920px;height:22px;background:linear-gradient(#e9eff8,#e2e9f4);"></div>
<div style="left:0px;top:1078px;width:1920px;height:2px;background:#4a4a4a;"></div>
<div class="ls" style="left:3px;top:1061px;white-space:pre;font-size:13.800px;line-height:19px;color:#1a1a1a;">Ready</div>
<div style="left:1698px;top:1058px;width:93px;height:21px;border:1px solid #b4c6e0;border-bottom:0;background:#eef3fb;"></div>
<div style="left:1795px;top:1058px;width:35px;height:21px;border:1px solid #b4c6e0;border-bottom:0;background:#eef3fb;"></div>
<div class="ls" style="left:1798px;top:1061px;white-space:pre;font-size:13.600px;line-height:18px;color:#1a1a1a;">CAP</div>
<div style="left:1834px;top:1058px;width:41px;height:21px;border:1px solid #b4c6e0;border-bottom:0;background:#eef3fb;"></div>
<div class="ls" style="left:1837px;top:1061px;white-space:pre;font-size:13.600px;line-height:18px;color:#1a1a1a;">NUM</div>
<div style="left:1879px;top:1058px;width:40px;height:21px;border:1px solid #b4c6e0;border-bottom:0;background:#eef3fb;"></div>
</body></html>
